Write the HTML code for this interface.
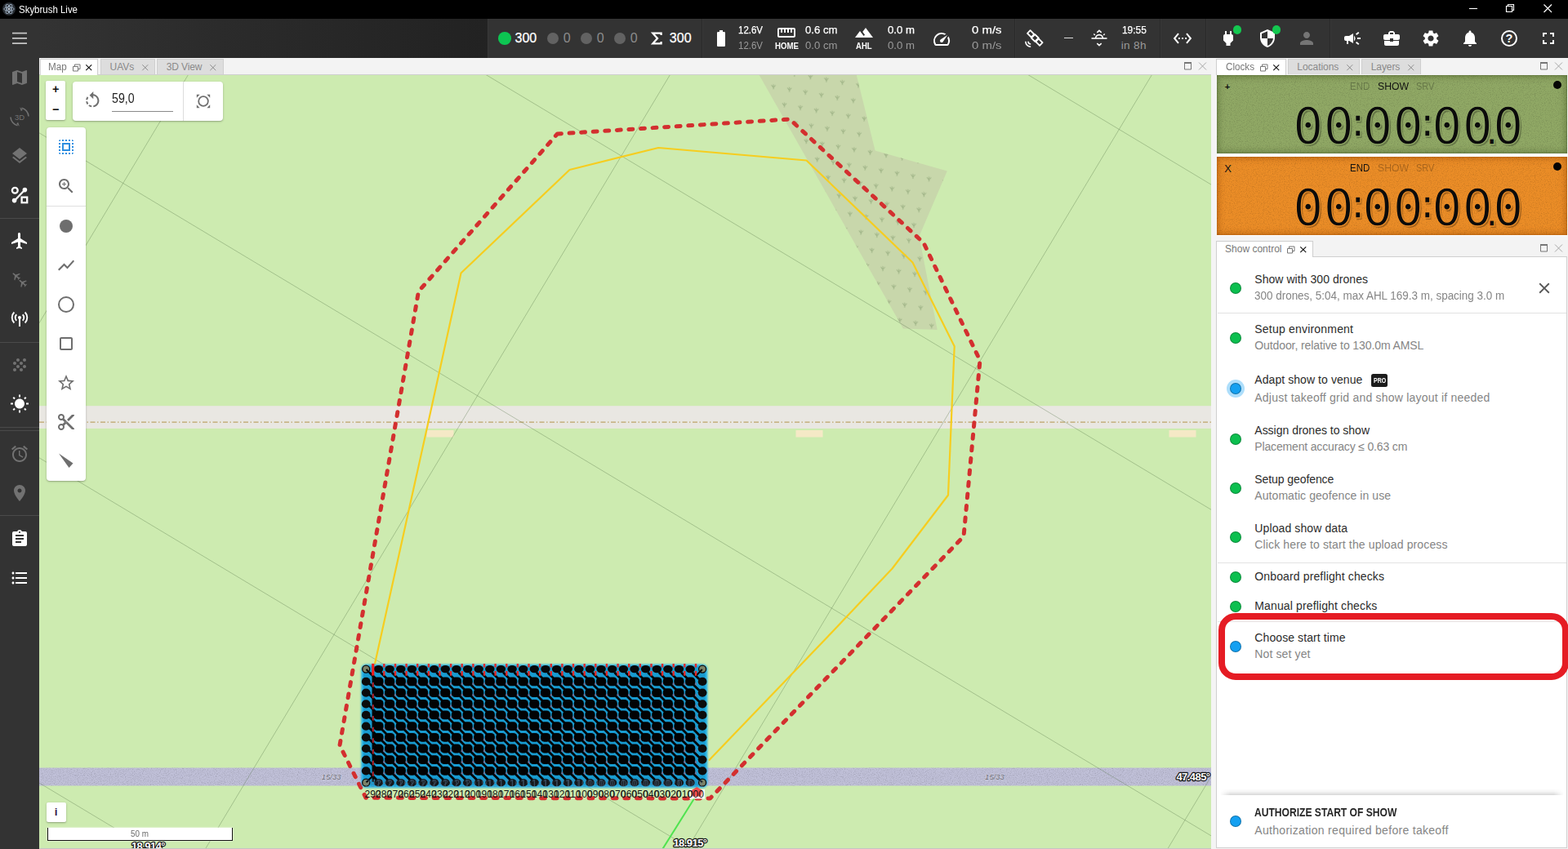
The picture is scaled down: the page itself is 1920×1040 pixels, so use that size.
<!DOCTYPE html>
<html lang="en">
<head>
<meta charset="utf-8">
<title>Skybrush Live</title>
<style>
html,body{margin:0;padding:0;background:#fff;overflow:hidden}
body{width:1920px;height:1040px;font-family:"Liberation Sans",sans-serif;-webkit-font-smoothing:antialiased}
#app{position:relative;width:1920px;height:1040px;overflow:hidden;background:#f2f2f2}
#app div,#app span,#app svg{position:absolute;box-sizing:border-box}
#app span{white-space:pre;display:block}
#app svg{display:block;overflow:visible}
.dot{border-radius:50%}
.w{-webkit-text-stroke:0.25px #fff}
#app p.digits{position:absolute;margin:0;font:400 61.5px/64px "DejaVu Sans Mono","Liberation Mono",monospace;color:#0b0b0b;white-space:pre;
 letter-spacing:0.5px;text-shadow:1.6px 1.6px 0.8px rgba(0,0,0,0.3)}
#app p.digits b{font-weight:400;font-size:50px;position:relative;top:-8.8px;margin-left:-10.7px;letter-spacing:-9.5px}
#app p.digits b.p{top:1.6px;font-size:48px;margin-left:-16px;letter-spacing:-12.9px}

</style>
</head>
<body>
<div id="app">
<div id="titlebar" style="left:0;top:0;width:1920px;height:23px;background:#000">
<svg style="left:2px;top:2px" width="18" height="18" viewBox="0 0 18 18"><circle cx="9" cy="9" r="8" fill="#2b3036"/><g fill="none" stroke="#9fb0c2" stroke-width="0.9"><ellipse cx="9" cy="9" rx="6.2" ry="2.4"/><ellipse cx="9" cy="9" rx="6.2" ry="2.4" transform="rotate(60 9 9)"/><ellipse cx="9" cy="9" rx="6.2" ry="2.4" transform="rotate(120 9 9)"/></g><circle cx="9" cy="9" r="1.2" fill="#cfd8e3"/></svg>
<span style="left:23.20px;top:5.84px;font-size:12px;line-height:12px;transform:scaleX(0.9553);transform-origin:0 0;color:#fff;">Skybrush Live</span>
<svg style="left:1790px;top:0" width="130" height="23" viewBox="0 0 130 23" fill="none" stroke="#fff" stroke-width="1.150"><path d="M9 10.5h10"/><path d="M54.5 7.5h7v7h-7z M56.5 7.5v-2h7v7h-2"/><path d="M100.5 5.5l9.5 9.5M110 5.500l-9.500 9.500"/></svg>
</div>
<div id="header" style="left:0;top:23px;width:1920px;height:48px;background:#333"></div>
<div style="left:48px;top:23px;width:549px;height:48px;background:linear-gradient(90deg,#333 0%,#2b2b2b 40%,#222 100%)"></div>
<div style="left:596.500px;top:23px;width:1px;height:48px;background:#393939"></div>
<svg style="left:15px;top:39px" width="18" height="16" viewBox="0 0 18 16" fill="#c6c6c6"><path d="M0 0.700h18v1.900H0zM0 6.950h18v1.900H0zM0 13.200h18v1.900H0z"/></svg>
<div class="dot" style="left:610.2px;top:39.2px;width:15.6px;height:15.6px;background:#0dc552"></div>
<span class="w" style="left:630.60px;top:38.86px;font-size:16px;line-height:16px;letter-spacing:-0.048px;color:#fff;">300</span>
<div class="dot" style="left:669.9px;top:40px;width:14px;height:14px;background:#626262"></div>
<span style="left:689.70px;top:38.86px;font-size:16px;line-height:16px;color:#8c8c8c;">0</span>
<div class="dot" style="left:710.8px;top:40px;width:14px;height:14px;background:#626262"></div>
<span style="left:730.70px;top:38.86px;font-size:16px;line-height:16px;color:#8c8c8c;">0</span>
<div class="dot" style="left:751.8px;top:40px;width:14px;height:14px;background:#626262"></div>
<span style="left:771.80px;top:38.86px;font-size:16px;line-height:16px;color:#8c8c8c;">0</span>
<svg style="left:796px;top:38px" width="16" height="18" viewBox="0 0 16 18" fill="none" stroke="#fff" stroke-width="2.3" stroke-linejoin="miter"><path d="M13.6 5V2.700H3.400L9 9 3.400 15.300H13.600V13"/></svg>
<span class="w" style="left:819.80px;top:38.86px;font-size:16px;line-height:16px;letter-spacing:0.052px;color:#fff;">300</span>
<div style="left:859px;top:23px;width:1px;height:48px;background:#2a2a2a"></div><div style="left:860px;top:23px;width:1px;height:48px;background:#383838"></div>
<svg style="left:871.00px;top:35.00px;" width="24" height="24" viewBox="0 0 24 24" fill="#fff"><path d="M15.67 4H14V2h-4v2H8.33C7.6 4 7 4.6 7 5.33v15.33C7 21.4 7.6 22 8.33 22h7.33c.74 0 1.34-.6 1.34-1.33V5.33C17 4.6 16.4 4 15.67 4z"/></svg>
<span class="w" style="left:903.90px;top:29.59px;font-size:13.6px;line-height:13.6px;transform:scaleX(0.8441);transform-origin:0 0;color:#fff;">12.6V</span>
<span style="left:903.90px;top:49.39px;font-size:13.6px;line-height:13.6px;transform:scaleX(0.8441);transform-origin:0 0;color:#9a9a9a;">12.6V</span>
<svg style="left:950.80px;top:28.00px;" width="24" height="24" viewBox="0 0 24 24" fill="#fff"><path d="M21 6H3c-1.1 0-2 .9-2 2v8c0 1.1.9 2 2 2h18c1.1 0 2-.9 2-2V8c0-1.1-.9-2-2-2zm0 10H3V8h2v4h2V8h2v4h2V8h2v4h2V8h2v4h2V8h2v8z"/></svg>
<span style="left:948.60px;top:50.56px;font-size:10.8px;line-height:10.8px;font-weight:700;transform:scaleX(0.8951);transform-origin:0 0;color:#fff;">HOME</span>
<span class="w" style="left:985.90px;top:29.59px;font-size:13.6px;line-height:13.6px;transform:scaleX(0.9654);transform-origin:0 0;color:#fff;">0.6 cm</span>
<span style="left:985.90px;top:49.39px;font-size:13.6px;line-height:13.6px;transform:scaleX(0.9654);transform-origin:0 0;color:#9a9a9a;">0.0 cm</span>
<svg style="left:1045.80px;top:28.00px;" width="24" height="24" viewBox="0 0 24 24" fill="#fff"><path d="M14 6l-3.75 5 2.85 3.8-1.6 1.2C9.81 13.75 7 10 7 10l-6 8h22L14 6z"/></svg>
<span style="left:1048.20px;top:50.56px;font-size:10.8px;line-height:10.8px;font-weight:700;transform:scaleX(0.8830);transform-origin:0 0;color:#fff;">AHL</span>
<span class="w" style="left:1087.20px;top:29.59px;font-size:13.6px;line-height:13.6px;transform:scaleX(0.9702);transform-origin:0 0;color:#fff;">0.0 m</span>
<span style="left:1087.20px;top:49.39px;font-size:13.6px;line-height:13.6px;transform:scaleX(0.9702);transform-origin:0 0;color:#9a9a9a;">0.0 m</span>
<svg style="left:1141.00px;top:35.50px;" width="24" height="24" viewBox="0 0 24 24" fill="#fff"><path d="M20.38 8.57l-1.23 1.85a8 8 0 0 1-.22 7.58H5.07A8 8 0 0 1 15.58 6.85l1.85-1.23A10 10 0 0 0 3.35 19a2 2 0 0 0 1.72 1h13.85a2 2 0 0 0 1.74-1 10 10 0 0 0-.27-10.44zm-9.79 6.84a2 2 0 0 0 2.83 0l5.66-8.49-8.49 5.66a2 2 0 0 0 0 2.83z"/></svg>
<span class="w" style="left:1189.60px;top:29.59px;font-size:13.6px;line-height:13.6px;transform:scaleX(1.0978);transform-origin:0 0;color:#fff;">0 m/s</span>
<span style="left:1189.60px;top:49.39px;font-size:13.6px;line-height:13.6px;transform:scaleX(1.0978);transform-origin:0 0;color:#9a9a9a;">0 m/s</span>
<div style="left:1242px;top:23px;width:1px;height:48px;background:#2a2a2a"></div><div style="left:1243px;top:23px;width:1px;height:48px;background:#383838"></div>
<svg style="left:1254px;top:35px" width="24" height="24" viewBox="0 0 24 24" fill="none" stroke="#fff" stroke-width="1.800" stroke-linejoin="round"><g transform="translate(13.300 11.500) rotate(45)"><rect x="-3.100" y="-3.100" width="6.200" height="6.200"/><rect x="-10.600" y="-2.500" width="6.700" height="5"/><rect x="3.900" y="-2.500" width="6.700" height="5"/></g><path d="M1.800 15.800a6.400 6.400 0 0 0 6.400 6.400M5 15.800a3.200 3.200 0 0 0 3.200 3.200" stroke-width="1.600"/></svg>
<div style="left:1303px;top:46px;width:11px;height:1.4px;background:#ddd"></div>
<svg style="left:1334px;top:35px" width="24" height="24" viewBox="0 0 24 24" fill="none" stroke="#fff" stroke-width="1.600"><path d="M2.500 12h19"/><path d="M7.600 12a4.400 4.400 0 0 1 8.800 0"/><path d="M9.300 4.800L12 2.400l2.700 2.400M9.300 18.200L12 20.600l2.700-2.400"/><path d="M5.300 6.600l1.500 1.500M18.700 6.600l-1.500 1.500" stroke-width="1.400"/></svg>
<span class="w" style="left:1373.90px;top:29.59px;font-size:13.6px;line-height:13.6px;transform:scaleX(0.8756);transform-origin:0 0;color:#fff;">19:55</span>
<span style="left:1372.80px;top:49.39px;font-size:13.6px;line-height:13.6px;letter-spacing:0.302px;color:#9a9a9a;">in 8h</span>
<div style="left:1420px;top:23px;width:1px;height:48px;background:#2a2a2a"></div><div style="left:1421px;top:23px;width:1px;height:48px;background:#383838"></div>
<svg style="left:1436.00px;top:34.80px;" width="24" height="24" viewBox="0 0 24 24" fill="#fff"><path d="M7.77 6.76L6.23 5.48.82 12l5.41 6.52 1.54-1.28L3.42 12l4.35-5.24zM7 13h2v-2H7v2zm10-2h-2v2h2v-2zm-6 2h2v-2h-2v2zm6.77-7.52l-1.54 1.28L20.58 12l-4.35 5.24 1.54 1.28L23.18 12l-5.41-6.52z"/></svg>
<div style="left:1476px;top:23px;width:1px;height:48px;background:#2a2a2a"></div><div style="left:1477px;top:23px;width:1px;height:48px;background:#383838"></div>
<svg style="left:1492.00px;top:35.00px;" width="24" height="24" viewBox="0 0 24 24" fill="#fff"><path d="M16.01 7L16 3h-2v4h-4V3H8v4h-.01C7 6.99 6 7.99 6 8.99v5.49L9.5 18v3h5v-3l3.5-3.51v-5.5c0-1-1-2-1.99-1.99z"/></svg>
<div class="dot" style="left:1509.7px;top:31px;width:10.6px;height:10.6px;background:#14c850"></div>
<svg style="left:1540.00px;top:35.00px;" width="24" height="24" viewBox="0 0 24 24" fill="#fff"><path d="M12 1L3 5v6c0 5.55 3.84 10.74 9 12 5.16-1.26 9-6.45 9-12V5l-9-4zm0 10.99h7c-.53 4.12-3.28 7.79-7 8.94V12H5V6.3l7-3.11v8.8z"/></svg>
<div class="dot" style="left:1557.700px;top:31px;width:10.600px;height:10.600px;background:#14c850"></div>
<svg style="left:1588.00px;top:35.00px;" width="24" height="24" viewBox="0 0 24 24" fill="#757575"><path d="M12 12c2.21 0 4-1.79 4-4s-1.79-4-4-4-4 1.79-4 4 1.79 4 4 4zm0 2c-2.67 0-8 1.34-8 4v2h16v-2c0-2.66-5.33-4-8-4z"/></svg>
<div style="left:1628px;top:23px;width:1px;height:48px;background:#2a2a2a"></div><div style="left:1629px;top:23px;width:1px;height:48px;background:#383838"></div>
<svg style="left:1644.00px;top:35.00px;" width="24" height="24" viewBox="0 0 24 24" fill="#fff"><path d="M18 11v2h4v-2h-4zm-2 6.61c.96.71 2.21 1.65 3.2 2.39.4-.53.8-1.07 1.2-1.6-.99-.74-2.24-1.68-3.2-2.4-.4.54-.8 1.08-1.2 1.61zM20.4 5.6c-.4-.53-.8-1.07-1.2-1.6-.99.74-2.24 1.68-3.2 2.4.4.53.8 1.07 1.2 1.6.96-.72 2.21-1.65 3.2-2.4zM4 9c-1.1 0-2 .9-2 2v2c0 1.1.9 2 2 2h1v4h2v-4h1l5 3V6L8 9H4zm11.5 3c0-1.33-.58-2.53-1.5-3.35v6.69c.92-.81 1.5-2.01 1.5-3.34z"/></svg>
<svg style="left:1692.00px;top:35.00px;" width="24" height="24" viewBox="0 0 24 24" fill="#fff"><path d="M10 16v-1H3.01L3 19c0 1.11.89 2 2 2h14c1.11 0 2-.89 2-2v-4h-7v1h-4zm10-9h-4.01V5l-2-2h-4l-2 2v2H4c-1.1 0-2 .9-2 2v3c0 1.11.89 2 2 2h6v-2h4v2h6c1.1 0 2-.9 2-2V9c0-1.1-.9-2-2-2zm-6 0h-4V5h4v2z"/></svg>
<svg style="left:1740.00px;top:35.00px;" width="24" height="24" viewBox="0 0 24 24" fill="#fff"><path d="M19.14 12.94c.04-.3.06-.61.06-.94 0-.32-.02-.64-.07-.94l2.03-1.58c.18-.14.23-.41.12-.61l-1.92-3.32c-.12-.22-.37-.29-.59-.22l-2.39.96c-.5-.38-1.03-.7-1.62-.94l-.36-2.54c-.04-.24-.24-.41-.48-.41h-3.84c-.24 0-.43.17-.47.41l-.36 2.54c-.59.24-1.13.57-1.62.94l-2.39-.96c-.22-.08-.47 0-.59.22L2.74 8.87c-.12.21-.08.47.12.61l2.03 1.58c-.05.3-.09.63-.09.94s.02.64.07.94l-2.03 1.58c-.18.14-.23.41-.12.61l1.92 3.32c.12.22.37.29.59.22l2.39-.96c.5.38 1.03.7 1.62.94l.36 2.54c.05.24.24.41.48.41h3.84c.24 0 .44-.17.47-.41l.36-2.54c.59-.24 1.13-.56 1.62-.94l2.39.96c.22.08.47 0 .59-.22l1.92-3.32c.12-.22.07-.47-.12-.61l-2.01-1.58zM12 15.6c-1.98 0-3.6-1.62-3.6-3.6s1.62-3.6 3.6-3.6 3.6 1.62 3.6 3.6-1.62 3.6-3.6 3.6z"/></svg>
<svg style="left:1788.00px;top:35.00px;" width="24" height="24" viewBox="0 0 24 24" fill="#fff"><path d="M12 22c1.1 0 2-.9 2-2h-4c0 1.1.89 2 2 2zm6-6v-5c0-3.07-1.64-5.64-4.5-6.32V4c0-.83-.67-1.5-1.5-1.5s-1.5.67-1.5 1.5v.68C7.63 5.36 6 7.92 6 11v5l-2 2v1h16v-1l-2-2z"/></svg>
<svg style="left:1836px;top:35px" width="24" height="24" viewBox="0 0 24 24"><circle cx="12" cy="12" r="9" fill="none" stroke="#fff" stroke-width="2"/><text x="12" y="17.200" text-anchor="middle" font-family="Liberation Sans, sans-serif" font-weight="700" font-size="14.500" fill="#fff">?</text></svg>
<svg style="left:1884.00px;top:35.00px;" width="24" height="24" viewBox="0 0 24 24" fill="#fff"><path d="M7 14H5v5h5v-2H7v-3zm-2-4h2V7h3V5H5v5zm12 7h-3v2h5v-5h-2v3zM14 5v2h3v3h2V5h-5z"/></svg>
<div id="sidebar" style="left:0;top:71px;width:48px;height:969px;background:#333"></div>
<svg style="left:12.00px;top:83.00px;" width="24" height="24" viewBox="0 0 24 24" fill="#727272"><path d="M20.5 3l-.16.03L15 5.1 9 3 3.36 4.9c-.21.07-.36.25-.36.48V20.5c0 .28.22.5.5.5l.16-.03L9 18.9l6 2.1 5.64-1.9c.21-.07.36-.25.36-.48V3.5c0-.28-.22-.5-.5-.5zM15 19l-6-2.11V5l6 2.11V19z"/></svg>
<svg style="left:12px;top:131px" width="24" height="24" viewBox="0 0 24 24" fill="none" stroke="#727272" stroke-width="1.600"><path d="M14.500 1.300A11 11 0 0 1 23 11.500"/><path d="M9.500 22.700A11 11 0 0 1 1 12.500"/><path d="M12.200 0.200l3.500 3.300-1.800 1.700z" fill="#727272" stroke="none"/><path d="M11.800 23.800l-3.500-3.300 1.800-1.700z" fill="#727272" stroke="none"/><text x="12" y="15.600" text-anchor="middle" font-family="Liberation Sans, sans-serif" font-size="9.500" fill="#727272" stroke="none">3D</text></svg>
<svg style="left:12.00px;top:179.00px;" width="24" height="24" viewBox="0 0 24 24" fill="#727272"><path d="M11.99 18.54l-7.37-5.73L3 14.07l9 7 9-7-1.63-1.27-7.38 5.74zM12 16l7.36-5.73L21 9l-9-7-9 7 1.63 1.27L12 16z"/></svg>
<svg style="left:12px;top:227px" width="24" height="24" viewBox="0 0 24 24" fill="none" stroke="#fff" stroke-width="2.300"><circle cx="6.300" cy="6.300" r="3.400"/><rect x="14.600" y="14.600" width="6.600" height="6.600"/><path d="M5.800 18.700L18.200 5.800"/><circle cx="18.400" cy="5.600" r="2.800" fill="#fff" stroke="none"/><circle cx="5.600" cy="18.600" r="2.800" fill="#fff" stroke="none"/></svg>
<div style="left:0px;top:267px;width:48px;height:1px;background:#4a4a4a"></div>
<svg style="left:12.00px;top:283.00px;" width="24" height="24" viewBox="0 0 24 24" fill="#fff"><path d="M21 16v-2l-8-5V3.5c0-.83-.67-1.5-1.5-1.5S10 2.67 10 3.5V9l-8 5v2l8-2.5V19l-2 1.5V22l3.5-1 3.5 1v-1.5L13 19v-5.5l8 2.5z"/></svg>
<svg style="left:12px;top:331px" width="24" height="24" viewBox="0 0 24 24" fill="#727272"><g transform="translate(1.500 0.500) scale(0.540) rotate(-50 12 12)"><path d="M21 16v-2l-8-5V3.5c0-.83-.67-1.5-1.5-1.5S10 2.67 10 3.5V9l-8 5v2l8-2.5V19l-2 1.5V22l3.5-1 3.5 1v-1.5L13 19v-5.5l8 2.5z"/></g><g transform="translate(9.500 9) scale(0.540) rotate(-50 12 12)"><path d="M21 16v-2l-8-5V3.5c0-.83-.67-1.5-1.5-1.5S10 2.67 10 3.5V9l-8 5v2l8-2.5V19l-2 1.5V22l3.5-1 3.5 1v-1.5L13 19v-5.5l8 2.5z"/></g></svg>
<svg style="left:12px;top:379px" width="24" height="24" viewBox="0 0 24 24" fill="none" stroke="#fff" stroke-width="1.900" stroke-linecap="butt"><circle cx="12" cy="10" r="2.100" fill="#fff" stroke="none"/><path d="M12 11v10" stroke-width="2"/><path d="M8.300 6.200a5.300 5.300 0 0 0 0 7.600M15.700 6.200a5.300 5.300 0 0 1 0 7.600M5.400 3.500a9.200 9.200 0 0 0 0 13M18.600 3.500a9.200 9.200 0 0 1 0 13"/></svg>
<div style="left:0px;top:419px;width:48px;height:1px;background:#4a4a4a"></div>
<svg style="left:12.00px;top:435.00px;" width="24" height="24" viewBox="0 0 24 24" fill="#727272"><path d="M10 12c-1.1 0-2 .9-2 2s.9 2 2 2 2-.9 2-2-.9-2-2-2zM6 8c-1.1 0-2 .9-2 2s.9 2 2 2 2-.9 2-2-.9-2-2-2zm0 8c-1.1 0-2 .9-2 2s.9 2 2 2 2-.9 2-2-.9-2-2-2zm12-8c1.1 0 2-.9 2-2s-.9-2-2-2-2 .9-2 2 .9 2 2 2zm-4 8c-1.1 0-2 .9-2 2s.9 2 2 2 2-.9 2-2-.9-2-2-2zm4-4c-1.1 0-2 .9-2 2s.9 2 2 2 2-.9 2-2-.9-2-2-2zm-4-4c-1.1 0-2 .9-2 2s.9 2 2 2 2-.9 2-2-.9-2-2-2zm-4-4c-1.1 0-2 .9-2 2s.9 2 2 2 2-.9 2-2-.9-2-2-2z"/></svg>
<svg style="left:12.00px;top:482.50px;" width="24" height="24" viewBox="0 0 24 24" fill="#fff"><path d="M6.76 4.84l-1.8-1.79-1.41 1.41 1.79 1.79 1.42-1.41zM4 10.5H1v2h3v-2zm9-9.95h-2V3.5h2V.55zm7.45 3.91l-1.41-1.41-1.79 1.79 1.41 1.41 1.79-1.79zm-3.21 13.7l1.79 1.8 1.41-1.41-1.8-1.79-1.4 1.4zM20 10.5v2h3v-2h-3zm-8-5c-3.31 0-6 2.69-6 6s2.69 6 6 6 6-2.69 6-6-2.69-6-6-6zm-1 16.95h2V19.5h-2v2.95zm-7.45-3.91l1.41 1.41 1.79-1.8-1.41-1.41-1.79 1.8z"/></svg>
<div style="left:0px;top:523px;width:48px;height:1px;background:#4a4a4a"></div>
<div style="left:0px;top:527px;width:48px;height:1px;background:#4a4a4a"></div>
<svg style="left:12.00px;top:544.00px;" width="24" height="24" viewBox="0 0 24 24" fill="#727272"><path d="M22 5.72l-4.6-3.86-1.29 1.53 4.6 3.86L22 5.72zM7.88 3.39L6.6 1.86 2 5.71l1.29 1.53 4.59-3.85zM12.5 8H11v6l4.75 2.85.75-1.23-4-2.37V8zM12 4c-4.97 0-9 4.03-9 9s4.02 9 9 9c4.97 0 9-4.03 9-9s-4.03-9-9-9zm0 16c-3.87 0-7-3.13-7-7s3.13-7 7-7 7 3.13 7 7-3.13 7-7 7z"/></svg>
<svg style="left:12.00px;top:592.00px;" width="24" height="24" viewBox="0 0 24 24" fill="#727272"><path d="M12 2C8.13 2 5 5.13 5 9c0 5.25 7 13 7 13s7-7.75 7-13c0-3.87-3.13-7-7-7zm0 9.5c-1.38 0-2.5-1.12-2.5-2.5s1.12-2.5 2.5-2.5 2.5 1.12 2.5 2.5-1.12 2.5-2.5 2.5z"/></svg>
<div style="left:0px;top:631px;width:48px;height:1px;background:#4a4a4a"></div>
<svg style="left:12.00px;top:647.50px;" width="24" height="24" viewBox="0 0 24 24" fill="#fff"><path d="M19 3h-4.18C14.4 1.84 13.3 1 12 1c-1.3 0-2.4.84-2.82 2H5c-1.1 0-2 .9-2 2v14c0 1.1.9 2 2 2h14c1.1 0 2-.9 2-2V5c0-1.1-.9-2-2-2zm-7 0c.55 0 1 .45 1 1s-.45 1-1 1-1-.45-1-1 .45-1 1-1zm2 14H7v-2h7v2zm3-4H7v-2h10v2zm0-4H7V7h10v2z"/></svg>
<svg style="left:12.00px;top:695.50px;" width="24" height="24" viewBox="0 0 24 24" fill="#fff"><path d="M4 10.5c-.83 0-1.5.67-1.5 1.5s.67 1.5 1.5 1.5 1.5-.67 1.5-1.5-.67-1.5-1.5-1.5zm0-6c-.83 0-1.5.67-1.5 1.5S3.17 7.5 4 7.5 5.5 6.83 5.5 6 4.83 4.5 4 4.5zm0 12c-.83 0-1.5.68-1.5 1.5s.68 1.5 1.5 1.5 1.5-.68 1.5-1.5-.67-1.5-1.5-1.5zM7 19h14v-2H7v2zm0-6h14v-2H7v2zm0-8v2h14V5H7z"/></svg>
<div style="left:48px;top:71px;width:1872px;height:969px;background:#f1f1f1"></div>
<div style="left:48px;top:1038.500px;width:1436px;height:1px;background:#c4c4c4"></div>
<div style="left:48px;top:71px;width:1436px;height:21px;background:#f3f3f3;border-bottom:1px solid #cfcfcf"></div>
<div style="left:48.5px;top:72px;width:71.8px;height:20px;background:#fff;border:1px solid #cfcfcf;border-bottom:0"></div>
<span style="left:59.30px;top:76.04px;font-size:12px;line-height:12px;transform:scaleX(0.9724);transform-origin:0 0;color:#777;">Map</span>
<svg style="left:89.3px;top:77.5px" width="10" height="10" viewBox="0 0 10 10" fill="none" stroke="#777" stroke-width="1"><path d="M0.5 3.5h6v5.500h-6z"/><path d="M2.500 3.500v-2.500h6.500v5.500h-2.500"/></svg>
<svg style="left:104.6px;top:78.5px" width="7.500" height="7.500" viewBox="0 0 8 8" fill="none" stroke="#111" stroke-width="1.2"><path d="M0.300 0.300l7.400 7.400M7.700 0.300l-7.400 7.400"/></svg>
<div style="left:123px;top:72px;width:67px;height:19px;background:#dddddd;border:1px solid #cfcfcf;border-bottom:0"></div>
<span style="left:134.60px;top:76.04px;font-size:12px;line-height:12px;letter-spacing:-0.061px;color:#8a8a8a;">UAVs</span>
<svg style="left:174px;top:78.5px" width="7.500" height="7.500" viewBox="0 0 8 8" fill="none" stroke="#888" stroke-width="1"><path d="M0.300 0.300l7.400 7.400M7.700 0.300l-7.400 7.400"/></svg>
<div style="left:192px;top:72px;width:81.80000000000001px;height:19px;background:#dddddd;border:1px solid #cfcfcf;border-bottom:0"></div>
<span style="left:203.80px;top:76.04px;font-size:12px;line-height:12px;letter-spacing:-0.128px;color:#8a8a8a;">3D View</span>
<svg style="left:257.4px;top:78.5px" width="7.500" height="7.500" viewBox="0 0 8 8" fill="none" stroke="#888" stroke-width="1"><path d="M0.300 0.300l7.400 7.400M7.700 0.300l-7.400 7.400"/></svg>
<svg style="left:1450px;top:76px" width="30" height="10" viewBox="0 0 30 10" fill="none"><path d="M0.500 1.500h8v7.500h-8z" stroke="#777" stroke-width="1"/><path d="M0 1h9" stroke="#777" stroke-width="2"/><path d="M18 0.500l9 9M27 0.500l-9 9" stroke="#a8a8a8" stroke-width="1"/></svg>
<svg id="map" style="left:48px;top:91.5px;overflow:hidden" width="1435" height="947.0" viewBox="48 91.5 1435 947.0">
<defs><pattern id="scrub" width="30" height="26" patternUnits="userSpaceOnUse" patternTransform="rotate(-31)"><g transform="rotate(31 7 7)"><path d="M4.500 4.200l2.500 3.300l2.500-3.300M7 9.500v-6.300" fill="none" stroke="#a3b78a" stroke-width="1.100"/></g><g transform="rotate(31 22 20)"><path d="M19.500 17.200l2.500 3.300l2.500-3.300M22 22.500v-6.300" fill="none" stroke="#a3b78a" stroke-width="1.100"/></g></pattern><filter id="noise" x="0" y="0" width="100%" height="100%"><feTurbulence type="fractalNoise" baseFrequency="0.9" numOctaves="2" seed="3" result="n"/><feColorMatrix type="matrix" values="0 0 0 0 0  0 0 0 0 0  0 0 0 0 0  0 0 0 -1.1 0.62" in="n"/><feComposite operator="in" in2="SourceGraphic"/></filter><filter id="glow" x="-5%" y="-10%" width="110%" height="120%"><feGaussianBlur stdDeviation="1.300"/></filter><filter id="halo" x="-20%" y="-20%" width="140%" height="140%"><feGaussianBlur stdDeviation="0.6"/></filter></defs>
<rect x="48" y="91.5" width="1435" height="947.0" fill="#cdebb0"/>
<polygon points="929.4,91 1048.7,91 1071.6,184 1159.8,209 1125.5,289 1147.7,403.5 1105.9,402" fill="#c8d7ab"/>
<polygon points="929.4,91 1048.7,91 1071.6,184 1159.8,209 1125.5,289 1147.7,403.5 1105.9,402" fill="url(#scrub)"/>
<rect x="48" y="496.700" width="1436" height="27.700" fill="#e9e7e2"/>
<path d="M48 516.700H1484" stroke="#bca468" stroke-width="1.200" stroke-dasharray="6 2.500 1.500 2.500" fill="none"/>
<rect x="522.5" y="526.500" width="33" height="8.500" fill="#f5e9c6"/>
<rect x="974.5" y="526.500" width="33" height="8.500" fill="#f5e9c6"/>
<rect x="1431.5" y="526.500" width="33" height="8.500" fill="#f5e9c6"/>
<rect x="48" y="940" width="1436" height="22" fill="#c0c0d8"/>
<rect x="48" y="940" width="1436" height="22" fill="#9c9cb8" filter="url(#noise)" opacity="0.3"/>
<text x="405.7" y="954.600" text-anchor="middle" font-family="Liberation Sans, sans-serif" font-style="italic" font-size="9.500" fill="#e4e4ee" stroke="#e4e4ee" stroke-width="1.200" opacity="0.45">15/33</text>
<text x="405.7" y="954.600" text-anchor="middle" font-family="Liberation Sans, sans-serif" font-style="italic" font-size="9.500" fill="#6c6c76">15/33</text>
<text x="1218" y="954.600" text-anchor="middle" font-family="Liberation Sans, sans-serif" font-style="italic" font-size="9.500" fill="#e4e4ee" stroke="#e4e4ee" stroke-width="1.200" opacity="0.45">15/33</text>
<text x="1218" y="954.600" text-anchor="middle" font-family="Liberation Sans, sans-serif" font-style="italic" font-size="9.500" fill="#6c6c76">15/33</text>
<path d="M48 162.3L1484 1023.9M595 91L1484 624.4M1258.7 91L1484 226.2M48 560.3L850 1041.5M48 958.5L190 1043.7M230.5 91L45.1 400M820.5 91L251.1 1040M1410.5 91L841.1 1040M1484 949L1429.4 1040" stroke="#567446" stroke-opacity="0.42" stroke-width="0.85" fill="none"/>
<polyline points="458.7,814.0 523.7,520.0 564.5,334.0 697.5,207.5 806.2,180.5 987.5,196.0 1117.5,321.0 1168.7,423.7 1161.0,606.0 1092.5,696.0 1013.0,780.0 868.0,931.0" fill="none" stroke="#f6cd1f" stroke-width="2.200" stroke-linejoin="round"/>
<polygon points="682.5,163.5 967.0,145.5 1131.0,297.0 1200.0,441.0 1180.0,656.5 869.5,977.5 448.0,976.8 416.0,912.5 512.5,356.5" fill="none" stroke="#d32f2f" stroke-width="5" stroke-dasharray="4.900 9.700" stroke-linecap="round" stroke-linejoin="round"/>
<path d="M850.500 977L811 1040" stroke="#4fe34f" stroke-width="2" fill="none"/>
<g id="uavs">
<rect x="442.300" y="813.200" width="424" height="151.300" rx="6" fill="#22b0e6" filter="url(#glow)"/>
<rect x="445" y="816" width="418.500" height="145.500" rx="4" fill="#189bd0"/>
<defs><rect id="bl" x="-6.100" y="-5.400" width="12.200" height="10.800" rx="4.600" fill="#020304"/><ellipse id="bt" rx="5.700" ry="4.700" fill="#06080a"/><circle id="bc" r="4.500" fill="#7b8266" stroke="#0a0a0a" stroke-width="1.300"/><ellipse id="be" rx="5.400" ry="5.100" fill="#0b0c0c"/><ellipse id="bb" rx="5.700" ry="4.600" fill="#15181c"/><path id="arm" d="M-4.200 -4.400L4.200 4" stroke="#020304" stroke-width="2.800" fill="none"/><path id="tk" d="M0 -15.200V-10.500M0 -6V-0.400" stroke="#e02a2a" stroke-width="2.400" fill="none"/><path id="td" d="M0 -5.500V-2.500" stroke="#d8405a" stroke-width="1.500" fill="none" opacity="0.55"/></defs>
<use href="#bc" x="448.2" y="819.1"/><use href="#bt" x="463.5" y="819.1"/><use href="#bt" x="477.1" y="819.1"/><use href="#bt" x="490.8" y="819.1"/><use href="#bt" x="504.4" y="819.1"/><use href="#bt" x="518.0" y="819.1"/><use href="#bt" x="531.7" y="819.1"/><use href="#bt" x="545.3" y="819.1"/><use href="#bt" x="558.9" y="819.1"/><use href="#bt" x="572.6" y="819.1"/><use href="#bt" x="586.2" y="819.1"/><use href="#bt" x="599.8" y="819.1"/><use href="#bt" x="613.4" y="819.1"/><use href="#bt" x="627.1" y="819.1"/><use href="#bt" x="640.7" y="819.1"/><use href="#bt" x="654.3" y="819.1"/><use href="#bt" x="668.0" y="819.1"/><use href="#bt" x="681.6" y="819.1"/><use href="#bt" x="695.2" y="819.1"/><use href="#bt" x="708.9" y="819.1"/><use href="#bt" x="722.5" y="819.1"/><use href="#bt" x="736.1" y="819.1"/><use href="#bt" x="749.7" y="819.1"/><use href="#bt" x="763.4" y="819.1"/><use href="#bt" x="777.0" y="819.1"/><use href="#bt" x="790.6" y="819.1"/><use href="#bt" x="804.3" y="819.1"/><use href="#bt" x="817.9" y="819.1"/><use href="#bt" x="831.5" y="819.1"/><use href="#bt" x="845.2" y="819.1"/><use href="#bc" x="860.1" y="819.1"/><use href="#be" x="448.2" y="834.4"/><use href="#bl" x="463.5" y="834.4"/><use href="#bl" x="477.1" y="834.4"/><use href="#bl" x="490.8" y="834.4"/><use href="#bl" x="504.4" y="834.4"/><use href="#bl" x="518.0" y="834.4"/><use href="#bl" x="531.7" y="834.4"/><use href="#bl" x="545.3" y="834.4"/><use href="#bl" x="558.9" y="834.4"/><use href="#bl" x="572.6" y="834.4"/><use href="#bl" x="586.2" y="834.4"/><use href="#bl" x="599.8" y="834.4"/><use href="#bl" x="613.4" y="834.4"/><use href="#bl" x="627.1" y="834.4"/><use href="#bl" x="640.7" y="834.4"/><use href="#bl" x="654.3" y="834.4"/><use href="#bl" x="668.0" y="834.4"/><use href="#bl" x="681.6" y="834.4"/><use href="#bl" x="695.2" y="834.4"/><use href="#bl" x="708.9" y="834.4"/><use href="#bl" x="722.5" y="834.4"/><use href="#bl" x="736.1" y="834.4"/><use href="#bl" x="749.7" y="834.4"/><use href="#bl" x="763.4" y="834.4"/><use href="#bl" x="777.0" y="834.4"/><use href="#bl" x="790.6" y="834.4"/><use href="#bl" x="804.3" y="834.4"/><use href="#bl" x="817.9" y="834.4"/><use href="#bl" x="831.5" y="834.4"/><use href="#bl" x="845.2" y="834.4"/><use href="#be" x="860.1" y="834.4"/><use href="#be" x="448.2" y="848.1"/><use href="#bl" x="463.5" y="848.1"/><use href="#bl" x="477.1" y="848.1"/><use href="#bl" x="490.8" y="848.1"/><use href="#bl" x="504.4" y="848.1"/><use href="#bl" x="518.0" y="848.1"/><use href="#bl" x="531.7" y="848.1"/><use href="#bl" x="545.3" y="848.1"/><use href="#bl" x="558.9" y="848.1"/><use href="#bl" x="572.6" y="848.1"/><use href="#bl" x="586.2" y="848.1"/><use href="#bl" x="599.8" y="848.1"/><use href="#bl" x="613.4" y="848.1"/><use href="#bl" x="627.1" y="848.1"/><use href="#bl" x="640.7" y="848.1"/><use href="#bl" x="654.3" y="848.1"/><use href="#bl" x="668.0" y="848.1"/><use href="#bl" x="681.6" y="848.1"/><use href="#bl" x="695.2" y="848.1"/><use href="#bl" x="708.9" y="848.1"/><use href="#bl" x="722.5" y="848.1"/><use href="#bl" x="736.1" y="848.1"/><use href="#bl" x="749.7" y="848.1"/><use href="#bl" x="763.4" y="848.1"/><use href="#bl" x="777.0" y="848.1"/><use href="#bl" x="790.6" y="848.1"/><use href="#bl" x="804.3" y="848.1"/><use href="#bl" x="817.9" y="848.1"/><use href="#bl" x="831.5" y="848.1"/><use href="#bl" x="845.2" y="848.1"/><use href="#be" x="860.1" y="848.1"/><use href="#be" x="448.2" y="861.8"/><use href="#bl" x="463.5" y="861.8"/><use href="#bl" x="477.1" y="861.8"/><use href="#bl" x="490.8" y="861.8"/><use href="#bl" x="504.4" y="861.8"/><use href="#bl" x="518.0" y="861.8"/><use href="#bl" x="531.7" y="861.8"/><use href="#bl" x="545.3" y="861.8"/><use href="#bl" x="558.9" y="861.8"/><use href="#bl" x="572.6" y="861.8"/><use href="#bl" x="586.2" y="861.8"/><use href="#bl" x="599.8" y="861.8"/><use href="#bl" x="613.4" y="861.8"/><use href="#bl" x="627.1" y="861.8"/><use href="#bl" x="640.7" y="861.8"/><use href="#bl" x="654.3" y="861.8"/><use href="#bl" x="668.0" y="861.8"/><use href="#bl" x="681.6" y="861.8"/><use href="#bl" x="695.2" y="861.8"/><use href="#bl" x="708.9" y="861.8"/><use href="#bl" x="722.5" y="861.8"/><use href="#bl" x="736.1" y="861.8"/><use href="#bl" x="749.7" y="861.8"/><use href="#bl" x="763.4" y="861.8"/><use href="#bl" x="777.0" y="861.8"/><use href="#bl" x="790.6" y="861.8"/><use href="#bl" x="804.3" y="861.8"/><use href="#bl" x="817.9" y="861.8"/><use href="#bl" x="831.5" y="861.8"/><use href="#bl" x="845.2" y="861.8"/><use href="#be" x="860.1" y="861.8"/><use href="#be" x="448.2" y="875.4"/><use href="#bl" x="463.5" y="875.4"/><use href="#bl" x="477.1" y="875.4"/><use href="#bl" x="490.8" y="875.4"/><use href="#bl" x="504.4" y="875.4"/><use href="#bl" x="518.0" y="875.4"/><use href="#bl" x="531.7" y="875.4"/><use href="#bl" x="545.3" y="875.4"/><use href="#bl" x="558.9" y="875.4"/><use href="#bl" x="572.6" y="875.4"/><use href="#bl" x="586.2" y="875.4"/><use href="#bl" x="599.8" y="875.4"/><use href="#bl" x="613.4" y="875.4"/><use href="#bl" x="627.1" y="875.4"/><use href="#bl" x="640.7" y="875.4"/><use href="#bl" x="654.3" y="875.4"/><use href="#bl" x="668.0" y="875.4"/><use href="#bl" x="681.6" y="875.4"/><use href="#bl" x="695.2" y="875.4"/><use href="#bl" x="708.9" y="875.4"/><use href="#bl" x="722.5" y="875.4"/><use href="#bl" x="736.1" y="875.4"/><use href="#bl" x="749.7" y="875.4"/><use href="#bl" x="763.4" y="875.4"/><use href="#bl" x="777.0" y="875.4"/><use href="#bl" x="790.6" y="875.4"/><use href="#bl" x="804.3" y="875.4"/><use href="#bl" x="817.9" y="875.4"/><use href="#bl" x="831.5" y="875.4"/><use href="#bl" x="845.2" y="875.4"/><use href="#be" x="860.1" y="875.4"/><use href="#be" x="448.2" y="889.1"/><use href="#bl" x="463.5" y="889.1"/><use href="#bl" x="477.1" y="889.1"/><use href="#bl" x="490.8" y="889.1"/><use href="#bl" x="504.4" y="889.1"/><use href="#bl" x="518.0" y="889.1"/><use href="#bl" x="531.7" y="889.1"/><use href="#bl" x="545.3" y="889.1"/><use href="#bl" x="558.9" y="889.1"/><use href="#bl" x="572.6" y="889.1"/><use href="#bl" x="586.2" y="889.1"/><use href="#bl" x="599.8" y="889.1"/><use href="#bl" x="613.4" y="889.1"/><use href="#bl" x="627.1" y="889.1"/><use href="#bl" x="640.7" y="889.1"/><use href="#bl" x="654.3" y="889.1"/><use href="#bl" x="668.0" y="889.1"/><use href="#bl" x="681.6" y="889.1"/><use href="#bl" x="695.2" y="889.1"/><use href="#bl" x="708.9" y="889.1"/><use href="#bl" x="722.5" y="889.1"/><use href="#bl" x="736.1" y="889.1"/><use href="#bl" x="749.7" y="889.1"/><use href="#bl" x="763.4" y="889.1"/><use href="#bl" x="777.0" y="889.1"/><use href="#bl" x="790.6" y="889.1"/><use href="#bl" x="804.3" y="889.1"/><use href="#bl" x="817.9" y="889.1"/><use href="#bl" x="831.5" y="889.1"/><use href="#bl" x="845.2" y="889.1"/><use href="#be" x="860.1" y="889.1"/><use href="#be" x="448.2" y="902.8"/><use href="#bl" x="463.5" y="902.8"/><use href="#bl" x="477.1" y="902.8"/><use href="#bl" x="490.8" y="902.8"/><use href="#bl" x="504.4" y="902.8"/><use href="#bl" x="518.0" y="902.8"/><use href="#bl" x="531.7" y="902.8"/><use href="#bl" x="545.3" y="902.8"/><use href="#bl" x="558.9" y="902.8"/><use href="#bl" x="572.6" y="902.8"/><use href="#bl" x="586.2" y="902.8"/><use href="#bl" x="599.8" y="902.8"/><use href="#bl" x="613.4" y="902.8"/><use href="#bl" x="627.1" y="902.8"/><use href="#bl" x="640.7" y="902.8"/><use href="#bl" x="654.3" y="902.8"/><use href="#bl" x="668.0" y="902.8"/><use href="#bl" x="681.6" y="902.8"/><use href="#bl" x="695.2" y="902.8"/><use href="#bl" x="708.9" y="902.8"/><use href="#bl" x="722.5" y="902.8"/><use href="#bl" x="736.1" y="902.8"/><use href="#bl" x="749.7" y="902.8"/><use href="#bl" x="763.4" y="902.8"/><use href="#bl" x="777.0" y="902.8"/><use href="#bl" x="790.6" y="902.8"/><use href="#bl" x="804.3" y="902.8"/><use href="#bl" x="817.9" y="902.8"/><use href="#bl" x="831.5" y="902.8"/><use href="#bl" x="845.2" y="902.8"/><use href="#be" x="860.1" y="902.8"/><use href="#be" x="448.2" y="916.5"/><use href="#bl" x="463.5" y="916.5"/><use href="#bl" x="477.1" y="916.5"/><use href="#bl" x="490.8" y="916.5"/><use href="#bl" x="504.4" y="916.5"/><use href="#bl" x="518.0" y="916.5"/><use href="#bl" x="531.7" y="916.5"/><use href="#bl" x="545.3" y="916.5"/><use href="#bl" x="558.9" y="916.5"/><use href="#bl" x="572.6" y="916.5"/><use href="#bl" x="586.2" y="916.5"/><use href="#bl" x="599.8" y="916.5"/><use href="#bl" x="613.4" y="916.5"/><use href="#bl" x="627.1" y="916.5"/><use href="#bl" x="640.7" y="916.5"/><use href="#bl" x="654.3" y="916.5"/><use href="#bl" x="668.0" y="916.5"/><use href="#bl" x="681.6" y="916.5"/><use href="#bl" x="695.2" y="916.5"/><use href="#bl" x="708.9" y="916.5"/><use href="#bl" x="722.5" y="916.5"/><use href="#bl" x="736.1" y="916.5"/><use href="#bl" x="749.7" y="916.5"/><use href="#bl" x="763.4" y="916.5"/><use href="#bl" x="777.0" y="916.5"/><use href="#bl" x="790.6" y="916.5"/><use href="#bl" x="804.3" y="916.5"/><use href="#bl" x="817.9" y="916.5"/><use href="#bl" x="831.5" y="916.5"/><use href="#bl" x="845.2" y="916.5"/><use href="#be" x="860.1" y="916.5"/><use href="#be" x="448.2" y="930.1"/><use href="#bl" x="463.5" y="930.1"/><use href="#bl" x="477.1" y="930.1"/><use href="#bl" x="490.8" y="930.1"/><use href="#bl" x="504.4" y="930.1"/><use href="#bl" x="518.0" y="930.1"/><use href="#bl" x="531.7" y="930.1"/><use href="#bl" x="545.3" y="930.1"/><use href="#bl" x="558.9" y="930.1"/><use href="#bl" x="572.6" y="930.1"/><use href="#bl" x="586.2" y="930.1"/><use href="#bl" x="599.8" y="930.1"/><use href="#bl" x="613.4" y="930.1"/><use href="#bl" x="627.1" y="930.1"/><use href="#bl" x="640.7" y="930.1"/><use href="#bl" x="654.3" y="930.1"/><use href="#bl" x="668.0" y="930.1"/><use href="#bl" x="681.6" y="930.1"/><use href="#bl" x="695.2" y="930.1"/><use href="#bl" x="708.9" y="930.1"/><use href="#bl" x="722.5" y="930.1"/><use href="#bl" x="736.1" y="930.1"/><use href="#bl" x="749.7" y="930.1"/><use href="#bl" x="763.4" y="930.1"/><use href="#bl" x="777.0" y="930.1"/><use href="#bl" x="790.6" y="930.1"/><use href="#bl" x="804.3" y="930.1"/><use href="#bl" x="817.9" y="930.1"/><use href="#bl" x="831.5" y="930.1"/><use href="#bl" x="845.2" y="930.1"/><use href="#be" x="860.1" y="930.1"/><use href="#be" x="448.2" y="943.8"/><use href="#bl" x="463.5" y="943.8"/><use href="#bl" x="477.1" y="943.8"/><use href="#bl" x="490.8" y="943.8"/><use href="#bl" x="504.4" y="943.8"/><use href="#bl" x="518.0" y="943.8"/><use href="#bl" x="531.7" y="943.8"/><use href="#bl" x="545.3" y="943.8"/><use href="#bl" x="558.9" y="943.8"/><use href="#bl" x="572.6" y="943.8"/><use href="#bl" x="586.2" y="943.8"/><use href="#bl" x="599.8" y="943.8"/><use href="#bl" x="613.4" y="943.8"/><use href="#bl" x="627.1" y="943.8"/><use href="#bl" x="640.7" y="943.8"/><use href="#bl" x="654.3" y="943.8"/><use href="#bl" x="668.0" y="943.8"/><use href="#bl" x="681.6" y="943.8"/><use href="#bl" x="695.2" y="943.8"/><use href="#bl" x="708.9" y="943.8"/><use href="#bl" x="722.5" y="943.8"/><use href="#bl" x="736.1" y="943.8"/><use href="#bl" x="749.7" y="943.8"/><use href="#bl" x="763.4" y="943.8"/><use href="#bl" x="777.0" y="943.8"/><use href="#bl" x="790.6" y="943.8"/><use href="#bl" x="804.3" y="943.8"/><use href="#bl" x="817.9" y="943.8"/><use href="#bl" x="831.5" y="943.8"/><use href="#bl" x="845.2" y="943.8"/><use href="#be" x="860.1" y="943.8"/><use href="#bc" x="448.2" y="958.2"/><use href="#bb" x="463.5" y="958.2"/><use href="#bb" x="477.1" y="958.2"/><use href="#bb" x="490.8" y="958.2"/><use href="#bb" x="504.4" y="958.2"/><use href="#bb" x="518.0" y="958.2"/><use href="#bb" x="531.7" y="958.2"/><use href="#bb" x="545.3" y="958.2"/><use href="#bb" x="558.9" y="958.2"/><use href="#bb" x="572.6" y="958.2"/><use href="#bb" x="586.2" y="958.2"/><use href="#bb" x="599.8" y="958.2"/><use href="#bb" x="613.4" y="958.2"/><use href="#bb" x="627.1" y="958.2"/><use href="#bb" x="640.7" y="958.2"/><use href="#bb" x="654.3" y="958.2"/><use href="#bb" x="668.0" y="958.2"/><use href="#bb" x="681.6" y="958.2"/><use href="#bb" x="695.2" y="958.2"/><use href="#bb" x="708.9" y="958.2"/><use href="#bb" x="722.5" y="958.2"/><use href="#bb" x="736.1" y="958.2"/><use href="#bb" x="749.7" y="958.2"/><use href="#bb" x="763.4" y="958.2"/><use href="#bb" x="777.0" y="958.2"/><use href="#bb" x="790.6" y="958.2"/><use href="#bb" x="804.3" y="958.2"/><use href="#bb" x="817.9" y="958.2"/><use href="#bb" x="831.5" y="958.2"/><use href="#bb" x="845.2" y="958.2"/><use href="#bc" x="860.1" y="958.2"/>
<use href="#arm" x="456.7" y="827.6"/><use href="#arm" x="470.3" y="827.6"/><use href="#arm" x="484.0" y="827.6"/><use href="#arm" x="497.6" y="827.6"/><use href="#arm" x="511.2" y="827.6"/><use href="#arm" x="524.9" y="827.6"/><use href="#arm" x="538.5" y="827.6"/><use href="#arm" x="552.1" y="827.6"/><use href="#arm" x="565.7" y="827.6"/><use href="#arm" x="579.4" y="827.6"/><use href="#arm" x="593.0" y="827.6"/><use href="#arm" x="606.6" y="827.6"/><use href="#arm" x="620.3" y="827.6"/><use href="#arm" x="633.9" y="827.6"/><use href="#arm" x="647.5" y="827.6"/><use href="#arm" x="661.1" y="827.6"/><use href="#arm" x="674.8" y="827.6"/><use href="#arm" x="688.4" y="827.6"/><use href="#arm" x="702.0" y="827.6"/><use href="#arm" x="715.7" y="827.6"/><use href="#arm" x="729.3" y="827.6"/><use href="#arm" x="742.9" y="827.6"/><use href="#arm" x="756.6" y="827.6"/><use href="#arm" x="770.2" y="827.6"/><use href="#arm" x="783.8" y="827.6"/><use href="#arm" x="797.5" y="827.6"/><use href="#arm" x="811.1" y="827.6"/><use href="#arm" x="824.7" y="827.6"/><use href="#arm" x="838.3" y="827.6"/><use href="#arm" x="852.0" y="827.6"/><use href="#arm" x="456.7" y="841.3"/><use href="#arm" x="470.3" y="841.3"/><use href="#arm" x="484.0" y="841.3"/><use href="#arm" x="497.6" y="841.3"/><use href="#arm" x="511.2" y="841.3"/><use href="#arm" x="524.9" y="841.3"/><use href="#arm" x="538.5" y="841.3"/><use href="#arm" x="552.1" y="841.3"/><use href="#arm" x="565.7" y="841.3"/><use href="#arm" x="579.4" y="841.3"/><use href="#arm" x="593.0" y="841.3"/><use href="#arm" x="606.6" y="841.3"/><use href="#arm" x="620.3" y="841.3"/><use href="#arm" x="633.9" y="841.3"/><use href="#arm" x="647.5" y="841.3"/><use href="#arm" x="661.1" y="841.3"/><use href="#arm" x="674.8" y="841.3"/><use href="#arm" x="688.4" y="841.3"/><use href="#arm" x="702.0" y="841.3"/><use href="#arm" x="715.7" y="841.3"/><use href="#arm" x="729.3" y="841.3"/><use href="#arm" x="742.9" y="841.3"/><use href="#arm" x="756.6" y="841.3"/><use href="#arm" x="770.2" y="841.3"/><use href="#arm" x="783.8" y="841.3"/><use href="#arm" x="797.5" y="841.3"/><use href="#arm" x="811.1" y="841.3"/><use href="#arm" x="824.7" y="841.3"/><use href="#arm" x="838.3" y="841.3"/><use href="#arm" x="852.0" y="841.3"/><use href="#arm" x="456.7" y="854.9"/><use href="#arm" x="470.3" y="854.9"/><use href="#arm" x="484.0" y="854.9"/><use href="#arm" x="497.6" y="854.9"/><use href="#arm" x="511.2" y="854.9"/><use href="#arm" x="524.9" y="854.9"/><use href="#arm" x="538.5" y="854.9"/><use href="#arm" x="552.1" y="854.9"/><use href="#arm" x="565.7" y="854.9"/><use href="#arm" x="579.4" y="854.9"/><use href="#arm" x="593.0" y="854.9"/><use href="#arm" x="606.6" y="854.9"/><use href="#arm" x="620.3" y="854.9"/><use href="#arm" x="633.9" y="854.9"/><use href="#arm" x="647.5" y="854.9"/><use href="#arm" x="661.1" y="854.9"/><use href="#arm" x="674.8" y="854.9"/><use href="#arm" x="688.4" y="854.9"/><use href="#arm" x="702.0" y="854.9"/><use href="#arm" x="715.7" y="854.9"/><use href="#arm" x="729.3" y="854.9"/><use href="#arm" x="742.9" y="854.9"/><use href="#arm" x="756.6" y="854.9"/><use href="#arm" x="770.2" y="854.9"/><use href="#arm" x="783.8" y="854.9"/><use href="#arm" x="797.5" y="854.9"/><use href="#arm" x="811.1" y="854.9"/><use href="#arm" x="824.7" y="854.9"/><use href="#arm" x="838.3" y="854.9"/><use href="#arm" x="852.0" y="854.9"/><use href="#arm" x="456.7" y="868.6"/><use href="#arm" x="470.3" y="868.6"/><use href="#arm" x="484.0" y="868.6"/><use href="#arm" x="497.6" y="868.6"/><use href="#arm" x="511.2" y="868.6"/><use href="#arm" x="524.9" y="868.6"/><use href="#arm" x="538.5" y="868.6"/><use href="#arm" x="552.1" y="868.6"/><use href="#arm" x="565.7" y="868.6"/><use href="#arm" x="579.4" y="868.6"/><use href="#arm" x="593.0" y="868.6"/><use href="#arm" x="606.6" y="868.6"/><use href="#arm" x="620.3" y="868.6"/><use href="#arm" x="633.9" y="868.6"/><use href="#arm" x="647.5" y="868.6"/><use href="#arm" x="661.1" y="868.6"/><use href="#arm" x="674.8" y="868.6"/><use href="#arm" x="688.4" y="868.6"/><use href="#arm" x="702.0" y="868.6"/><use href="#arm" x="715.7" y="868.6"/><use href="#arm" x="729.3" y="868.6"/><use href="#arm" x="742.9" y="868.6"/><use href="#arm" x="756.6" y="868.6"/><use href="#arm" x="770.2" y="868.6"/><use href="#arm" x="783.8" y="868.6"/><use href="#arm" x="797.5" y="868.6"/><use href="#arm" x="811.1" y="868.6"/><use href="#arm" x="824.7" y="868.6"/><use href="#arm" x="838.3" y="868.6"/><use href="#arm" x="852.0" y="868.6"/><use href="#arm" x="456.7" y="882.3"/><use href="#arm" x="470.3" y="882.3"/><use href="#arm" x="484.0" y="882.3"/><use href="#arm" x="497.6" y="882.3"/><use href="#arm" x="511.2" y="882.3"/><use href="#arm" x="524.9" y="882.3"/><use href="#arm" x="538.5" y="882.3"/><use href="#arm" x="552.1" y="882.3"/><use href="#arm" x="565.7" y="882.3"/><use href="#arm" x="579.4" y="882.3"/><use href="#arm" x="593.0" y="882.3"/><use href="#arm" x="606.6" y="882.3"/><use href="#arm" x="620.3" y="882.3"/><use href="#arm" x="633.9" y="882.3"/><use href="#arm" x="647.5" y="882.3"/><use href="#arm" x="661.1" y="882.3"/><use href="#arm" x="674.8" y="882.3"/><use href="#arm" x="688.4" y="882.3"/><use href="#arm" x="702.0" y="882.3"/><use href="#arm" x="715.7" y="882.3"/><use href="#arm" x="729.3" y="882.3"/><use href="#arm" x="742.9" y="882.3"/><use href="#arm" x="756.6" y="882.3"/><use href="#arm" x="770.2" y="882.3"/><use href="#arm" x="783.8" y="882.3"/><use href="#arm" x="797.5" y="882.3"/><use href="#arm" x="811.1" y="882.3"/><use href="#arm" x="824.7" y="882.3"/><use href="#arm" x="838.3" y="882.3"/><use href="#arm" x="852.0" y="882.3"/><use href="#arm" x="456.7" y="896.0"/><use href="#arm" x="470.3" y="896.0"/><use href="#arm" x="484.0" y="896.0"/><use href="#arm" x="497.6" y="896.0"/><use href="#arm" x="511.2" y="896.0"/><use href="#arm" x="524.9" y="896.0"/><use href="#arm" x="538.5" y="896.0"/><use href="#arm" x="552.1" y="896.0"/><use href="#arm" x="565.7" y="896.0"/><use href="#arm" x="579.4" y="896.0"/><use href="#arm" x="593.0" y="896.0"/><use href="#arm" x="606.6" y="896.0"/><use href="#arm" x="620.3" y="896.0"/><use href="#arm" x="633.9" y="896.0"/><use href="#arm" x="647.5" y="896.0"/><use href="#arm" x="661.1" y="896.0"/><use href="#arm" x="674.8" y="896.0"/><use href="#arm" x="688.4" y="896.0"/><use href="#arm" x="702.0" y="896.0"/><use href="#arm" x="715.7" y="896.0"/><use href="#arm" x="729.3" y="896.0"/><use href="#arm" x="742.9" y="896.0"/><use href="#arm" x="756.6" y="896.0"/><use href="#arm" x="770.2" y="896.0"/><use href="#arm" x="783.8" y="896.0"/><use href="#arm" x="797.5" y="896.0"/><use href="#arm" x="811.1" y="896.0"/><use href="#arm" x="824.7" y="896.0"/><use href="#arm" x="838.3" y="896.0"/><use href="#arm" x="852.0" y="896.0"/><use href="#arm" x="456.7" y="909.6"/><use href="#arm" x="470.3" y="909.6"/><use href="#arm" x="484.0" y="909.6"/><use href="#arm" x="497.6" y="909.6"/><use href="#arm" x="511.2" y="909.6"/><use href="#arm" x="524.9" y="909.6"/><use href="#arm" x="538.5" y="909.6"/><use href="#arm" x="552.1" y="909.6"/><use href="#arm" x="565.7" y="909.6"/><use href="#arm" x="579.4" y="909.6"/><use href="#arm" x="593.0" y="909.6"/><use href="#arm" x="606.6" y="909.6"/><use href="#arm" x="620.3" y="909.6"/><use href="#arm" x="633.9" y="909.6"/><use href="#arm" x="647.5" y="909.6"/><use href="#arm" x="661.1" y="909.6"/><use href="#arm" x="674.8" y="909.6"/><use href="#arm" x="688.4" y="909.6"/><use href="#arm" x="702.0" y="909.6"/><use href="#arm" x="715.7" y="909.6"/><use href="#arm" x="729.3" y="909.6"/><use href="#arm" x="742.9" y="909.6"/><use href="#arm" x="756.6" y="909.6"/><use href="#arm" x="770.2" y="909.6"/><use href="#arm" x="783.8" y="909.6"/><use href="#arm" x="797.5" y="909.6"/><use href="#arm" x="811.1" y="909.6"/><use href="#arm" x="824.7" y="909.6"/><use href="#arm" x="838.3" y="909.6"/><use href="#arm" x="852.0" y="909.6"/><use href="#arm" x="456.7" y="923.3"/><use href="#arm" x="470.3" y="923.3"/><use href="#arm" x="484.0" y="923.3"/><use href="#arm" x="497.6" y="923.3"/><use href="#arm" x="511.2" y="923.3"/><use href="#arm" x="524.9" y="923.3"/><use href="#arm" x="538.5" y="923.3"/><use href="#arm" x="552.1" y="923.3"/><use href="#arm" x="565.7" y="923.3"/><use href="#arm" x="579.4" y="923.3"/><use href="#arm" x="593.0" y="923.3"/><use href="#arm" x="606.6" y="923.3"/><use href="#arm" x="620.3" y="923.3"/><use href="#arm" x="633.9" y="923.3"/><use href="#arm" x="647.5" y="923.3"/><use href="#arm" x="661.1" y="923.3"/><use href="#arm" x="674.8" y="923.3"/><use href="#arm" x="688.4" y="923.3"/><use href="#arm" x="702.0" y="923.3"/><use href="#arm" x="715.7" y="923.3"/><use href="#arm" x="729.3" y="923.3"/><use href="#arm" x="742.9" y="923.3"/><use href="#arm" x="756.6" y="923.3"/><use href="#arm" x="770.2" y="923.3"/><use href="#arm" x="783.8" y="923.3"/><use href="#arm" x="797.5" y="923.3"/><use href="#arm" x="811.1" y="923.3"/><use href="#arm" x="824.7" y="923.3"/><use href="#arm" x="838.3" y="923.3"/><use href="#arm" x="852.0" y="923.3"/><use href="#arm" x="456.7" y="937.0"/><use href="#arm" x="470.3" y="937.0"/><use href="#arm" x="484.0" y="937.0"/><use href="#arm" x="497.6" y="937.0"/><use href="#arm" x="511.2" y="937.0"/><use href="#arm" x="524.9" y="937.0"/><use href="#arm" x="538.5" y="937.0"/><use href="#arm" x="552.1" y="937.0"/><use href="#arm" x="565.7" y="937.0"/><use href="#arm" x="579.4" y="937.0"/><use href="#arm" x="593.0" y="937.0"/><use href="#arm" x="606.6" y="937.0"/><use href="#arm" x="620.3" y="937.0"/><use href="#arm" x="633.9" y="937.0"/><use href="#arm" x="647.5" y="937.0"/><use href="#arm" x="661.1" y="937.0"/><use href="#arm" x="674.8" y="937.0"/><use href="#arm" x="688.4" y="937.0"/><use href="#arm" x="702.0" y="937.0"/><use href="#arm" x="715.7" y="937.0"/><use href="#arm" x="729.3" y="937.0"/><use href="#arm" x="742.9" y="937.0"/><use href="#arm" x="756.6" y="937.0"/><use href="#arm" x="770.2" y="937.0"/><use href="#arm" x="783.8" y="937.0"/><use href="#arm" x="797.5" y="937.0"/><use href="#arm" x="811.1" y="937.0"/><use href="#arm" x="824.7" y="937.0"/><use href="#arm" x="838.3" y="937.0"/><use href="#arm" x="852.0" y="937.0"/><use href="#arm" x="456.7" y="950.6"/><use href="#arm" x="470.3" y="950.6"/><use href="#arm" x="484.0" y="950.6"/><use href="#arm" x="497.6" y="950.6"/><use href="#arm" x="511.2" y="950.6"/><use href="#arm" x="524.9" y="950.6"/><use href="#arm" x="538.5" y="950.6"/><use href="#arm" x="552.1" y="950.6"/><use href="#arm" x="565.7" y="950.6"/><use href="#arm" x="579.4" y="950.6"/><use href="#arm" x="593.0" y="950.6"/><use href="#arm" x="606.6" y="950.6"/><use href="#arm" x="620.3" y="950.6"/><use href="#arm" x="633.9" y="950.6"/><use href="#arm" x="647.5" y="950.6"/><use href="#arm" x="661.1" y="950.6"/><use href="#arm" x="674.8" y="950.6"/><use href="#arm" x="688.4" y="950.6"/><use href="#arm" x="702.0" y="950.6"/><use href="#arm" x="715.7" y="950.6"/><use href="#arm" x="729.3" y="950.6"/><use href="#arm" x="742.9" y="950.6"/><use href="#arm" x="756.6" y="950.6"/><use href="#arm" x="770.2" y="950.6"/><use href="#arm" x="783.8" y="950.6"/><use href="#arm" x="797.5" y="950.6"/><use href="#arm" x="811.1" y="950.6"/><use href="#arm" x="824.7" y="950.6"/><use href="#arm" x="838.3" y="950.6"/><use href="#arm" x="852.0" y="950.6"/>
<path d="M448.500 819.500L456 827M859.800 819.500L852.500 827M448.500 957.800L456 950.500M859.800 957.800L852.500 950.500" stroke="#020304" stroke-width="2" fill="none"/>
<use href="#tk" x="456.7" y="827.6"/><use href="#tk" x="470.3" y="827.6"/><use href="#tk" x="484.0" y="827.6"/><use href="#tk" x="497.6" y="827.6"/><use href="#tk" x="511.2" y="827.6"/><use href="#tk" x="524.9" y="827.6"/><use href="#tk" x="538.5" y="827.6"/><use href="#tk" x="552.1" y="827.6"/><use href="#tk" x="565.7" y="827.6"/><use href="#tk" x="579.4" y="827.6"/><use href="#tk" x="593.0" y="827.6"/><use href="#tk" x="606.6" y="827.6"/><use href="#tk" x="620.3" y="827.6"/><use href="#tk" x="633.9" y="827.6"/><use href="#tk" x="647.5" y="827.6"/><use href="#tk" x="661.1" y="827.6"/><use href="#tk" x="674.8" y="827.6"/><use href="#tk" x="688.4" y="827.6"/><use href="#tk" x="702.0" y="827.6"/><use href="#tk" x="715.7" y="827.6"/><use href="#tk" x="729.3" y="827.6"/><use href="#tk" x="742.9" y="827.6"/><use href="#tk" x="756.6" y="827.6"/><use href="#tk" x="770.2" y="827.6"/><use href="#tk" x="783.8" y="827.6"/><use href="#tk" x="797.5" y="827.6"/><use href="#tk" x="811.1" y="827.6"/><use href="#tk" x="824.7" y="827.6"/><use href="#tk" x="838.3" y="827.6"/><use href="#tk" x="852.0" y="827.6"/><use href="#td" x="456.7" y="841.3"/><use href="#td" x="470.3" y="841.3"/><use href="#td" x="484.0" y="841.3"/><use href="#td" x="497.6" y="841.3"/><use href="#td" x="511.2" y="841.3"/><use href="#td" x="524.9" y="841.3"/><use href="#td" x="538.5" y="841.3"/><use href="#td" x="552.1" y="841.3"/><use href="#td" x="565.7" y="841.3"/><use href="#td" x="579.4" y="841.3"/><use href="#td" x="593.0" y="841.3"/><use href="#td" x="606.6" y="841.3"/><use href="#td" x="620.3" y="841.3"/><use href="#td" x="633.9" y="841.3"/><use href="#td" x="647.5" y="841.3"/><use href="#td" x="661.1" y="841.3"/><use href="#td" x="674.8" y="841.3"/><use href="#td" x="688.4" y="841.3"/><use href="#td" x="702.0" y="841.3"/><use href="#td" x="715.7" y="841.3"/><use href="#td" x="729.3" y="841.3"/><use href="#td" x="742.9" y="841.3"/><use href="#td" x="756.6" y="841.3"/><use href="#td" x="770.2" y="841.3"/><use href="#td" x="783.8" y="841.3"/><use href="#td" x="797.5" y="841.3"/><use href="#td" x="811.1" y="841.3"/><use href="#td" x="824.7" y="841.3"/><use href="#td" x="838.3" y="841.3"/><use href="#td" x="852.0" y="841.3"/><use href="#td" x="456.7" y="854.9"/><use href="#td" x="470.3" y="854.9"/><use href="#td" x="484.0" y="854.9"/><use href="#td" x="497.6" y="854.9"/><use href="#td" x="511.2" y="854.9"/><use href="#td" x="524.9" y="854.9"/><use href="#td" x="538.5" y="854.9"/><use href="#td" x="552.1" y="854.9"/><use href="#td" x="565.7" y="854.9"/><use href="#td" x="579.4" y="854.9"/><use href="#td" x="593.0" y="854.9"/><use href="#td" x="606.6" y="854.9"/><use href="#td" x="620.3" y="854.9"/><use href="#td" x="633.9" y="854.9"/><use href="#td" x="647.5" y="854.9"/><use href="#td" x="661.1" y="854.9"/><use href="#td" x="674.8" y="854.9"/><use href="#td" x="688.4" y="854.9"/><use href="#td" x="702.0" y="854.9"/><use href="#td" x="715.7" y="854.9"/><use href="#td" x="729.3" y="854.9"/><use href="#td" x="742.9" y="854.9"/><use href="#td" x="756.6" y="854.9"/><use href="#td" x="770.2" y="854.9"/><use href="#td" x="783.8" y="854.9"/><use href="#td" x="797.5" y="854.9"/><use href="#td" x="811.1" y="854.9"/><use href="#td" x="824.7" y="854.9"/><use href="#td" x="838.3" y="854.9"/><use href="#td" x="852.0" y="854.9"/><use href="#td" x="456.7" y="868.6"/><use href="#td" x="470.3" y="868.6"/><use href="#td" x="484.0" y="868.6"/><use href="#td" x="497.6" y="868.6"/><use href="#td" x="511.2" y="868.6"/><use href="#td" x="524.9" y="868.6"/><use href="#td" x="538.5" y="868.6"/><use href="#td" x="552.1" y="868.6"/><use href="#td" x="565.7" y="868.6"/><use href="#td" x="579.4" y="868.6"/><use href="#td" x="593.0" y="868.6"/><use href="#td" x="606.6" y="868.6"/><use href="#td" x="620.3" y="868.6"/><use href="#td" x="633.9" y="868.6"/><use href="#td" x="647.5" y="868.6"/><use href="#td" x="661.1" y="868.6"/><use href="#td" x="674.8" y="868.6"/><use href="#td" x="688.4" y="868.6"/><use href="#td" x="702.0" y="868.6"/><use href="#td" x="715.7" y="868.6"/><use href="#td" x="729.3" y="868.6"/><use href="#td" x="742.9" y="868.6"/><use href="#td" x="756.6" y="868.6"/><use href="#td" x="770.2" y="868.6"/><use href="#td" x="783.8" y="868.6"/><use href="#td" x="797.5" y="868.6"/><use href="#td" x="811.1" y="868.6"/><use href="#td" x="824.7" y="868.6"/><use href="#td" x="838.3" y="868.6"/><use href="#td" x="852.0" y="868.6"/><use href="#td" x="456.7" y="882.3"/><use href="#td" x="470.3" y="882.3"/><use href="#td" x="484.0" y="882.3"/><use href="#td" x="497.6" y="882.3"/><use href="#td" x="511.2" y="882.3"/><use href="#td" x="524.9" y="882.3"/><use href="#td" x="538.5" y="882.3"/><use href="#td" x="552.1" y="882.3"/><use href="#td" x="565.7" y="882.3"/><use href="#td" x="579.4" y="882.3"/><use href="#td" x="593.0" y="882.3"/><use href="#td" x="606.6" y="882.3"/><use href="#td" x="620.3" y="882.3"/><use href="#td" x="633.9" y="882.3"/><use href="#td" x="647.5" y="882.3"/><use href="#td" x="661.1" y="882.3"/><use href="#td" x="674.8" y="882.3"/><use href="#td" x="688.4" y="882.3"/><use href="#td" x="702.0" y="882.3"/><use href="#td" x="715.7" y="882.3"/><use href="#td" x="729.3" y="882.3"/><use href="#td" x="742.9" y="882.3"/><use href="#td" x="756.6" y="882.3"/><use href="#td" x="770.2" y="882.3"/><use href="#td" x="783.8" y="882.3"/><use href="#td" x="797.5" y="882.3"/><use href="#td" x="811.1" y="882.3"/><use href="#td" x="824.7" y="882.3"/><use href="#td" x="838.3" y="882.3"/><use href="#td" x="852.0" y="882.3"/><use href="#td" x="456.7" y="896.0"/><use href="#td" x="470.3" y="896.0"/><use href="#td" x="484.0" y="896.0"/><use href="#td" x="497.6" y="896.0"/><use href="#td" x="511.2" y="896.0"/><use href="#td" x="524.9" y="896.0"/><use href="#td" x="538.5" y="896.0"/><use href="#td" x="552.1" y="896.0"/><use href="#td" x="565.7" y="896.0"/><use href="#td" x="579.4" y="896.0"/><use href="#td" x="593.0" y="896.0"/><use href="#td" x="606.6" y="896.0"/><use href="#td" x="620.3" y="896.0"/><use href="#td" x="633.9" y="896.0"/><use href="#td" x="647.5" y="896.0"/><use href="#td" x="661.1" y="896.0"/><use href="#td" x="674.8" y="896.0"/><use href="#td" x="688.4" y="896.0"/><use href="#td" x="702.0" y="896.0"/><use href="#td" x="715.7" y="896.0"/><use href="#td" x="729.3" y="896.0"/><use href="#td" x="742.9" y="896.0"/><use href="#td" x="756.6" y="896.0"/><use href="#td" x="770.2" y="896.0"/><use href="#td" x="783.8" y="896.0"/><use href="#td" x="797.5" y="896.0"/><use href="#td" x="811.1" y="896.0"/><use href="#td" x="824.7" y="896.0"/><use href="#td" x="838.3" y="896.0"/><use href="#td" x="852.0" y="896.0"/><use href="#td" x="456.7" y="909.6"/><use href="#td" x="470.3" y="909.6"/><use href="#td" x="484.0" y="909.6"/><use href="#td" x="497.6" y="909.6"/><use href="#td" x="511.2" y="909.6"/><use href="#td" x="524.9" y="909.6"/><use href="#td" x="538.5" y="909.6"/><use href="#td" x="552.1" y="909.6"/><use href="#td" x="565.7" y="909.6"/><use href="#td" x="579.4" y="909.6"/><use href="#td" x="593.0" y="909.6"/><use href="#td" x="606.6" y="909.6"/><use href="#td" x="620.3" y="909.6"/><use href="#td" x="633.9" y="909.6"/><use href="#td" x="647.5" y="909.6"/><use href="#td" x="661.1" y="909.6"/><use href="#td" x="674.8" y="909.6"/><use href="#td" x="688.4" y="909.6"/><use href="#td" x="702.0" y="909.6"/><use href="#td" x="715.7" y="909.6"/><use href="#td" x="729.3" y="909.6"/><use href="#td" x="742.9" y="909.6"/><use href="#td" x="756.6" y="909.6"/><use href="#td" x="770.2" y="909.6"/><use href="#td" x="783.8" y="909.6"/><use href="#td" x="797.5" y="909.6"/><use href="#td" x="811.1" y="909.6"/><use href="#td" x="824.7" y="909.6"/><use href="#td" x="838.3" y="909.6"/><use href="#td" x="852.0" y="909.6"/><use href="#td" x="456.7" y="923.3"/><use href="#td" x="470.3" y="923.3"/><use href="#td" x="484.0" y="923.3"/><use href="#td" x="497.6" y="923.3"/><use href="#td" x="511.2" y="923.3"/><use href="#td" x="524.9" y="923.3"/><use href="#td" x="538.5" y="923.3"/><use href="#td" x="552.1" y="923.3"/><use href="#td" x="565.7" y="923.3"/><use href="#td" x="579.4" y="923.3"/><use href="#td" x="593.0" y="923.3"/><use href="#td" x="606.6" y="923.3"/><use href="#td" x="620.3" y="923.3"/><use href="#td" x="633.9" y="923.3"/><use href="#td" x="647.5" y="923.3"/><use href="#td" x="661.1" y="923.3"/><use href="#td" x="674.8" y="923.3"/><use href="#td" x="688.4" y="923.3"/><use href="#td" x="702.0" y="923.3"/><use href="#td" x="715.7" y="923.3"/><use href="#td" x="729.3" y="923.3"/><use href="#td" x="742.9" y="923.3"/><use href="#td" x="756.6" y="923.3"/><use href="#td" x="770.2" y="923.3"/><use href="#td" x="783.8" y="923.3"/><use href="#td" x="797.5" y="923.3"/><use href="#td" x="811.1" y="923.3"/><use href="#td" x="824.7" y="923.3"/><use href="#td" x="838.3" y="923.3"/><use href="#td" x="852.0" y="923.3"/><use href="#td" x="456.7" y="937.0"/><use href="#td" x="470.3" y="937.0"/><use href="#td" x="484.0" y="937.0"/><use href="#td" x="497.6" y="937.0"/><use href="#td" x="511.2" y="937.0"/><use href="#td" x="524.9" y="937.0"/><use href="#td" x="538.5" y="937.0"/><use href="#td" x="552.1" y="937.0"/><use href="#td" x="565.7" y="937.0"/><use href="#td" x="579.4" y="937.0"/><use href="#td" x="593.0" y="937.0"/><use href="#td" x="606.6" y="937.0"/><use href="#td" x="620.3" y="937.0"/><use href="#td" x="633.9" y="937.0"/><use href="#td" x="647.5" y="937.0"/><use href="#td" x="661.1" y="937.0"/><use href="#td" x="674.8" y="937.0"/><use href="#td" x="688.4" y="937.0"/><use href="#td" x="702.0" y="937.0"/><use href="#td" x="715.7" y="937.0"/><use href="#td" x="729.3" y="937.0"/><use href="#td" x="742.9" y="937.0"/><use href="#td" x="756.6" y="937.0"/><use href="#td" x="770.2" y="937.0"/><use href="#td" x="783.8" y="937.0"/><use href="#td" x="797.5" y="937.0"/><use href="#td" x="811.1" y="937.0"/><use href="#td" x="824.7" y="937.0"/><use href="#td" x="838.3" y="937.0"/><use href="#td" x="852.0" y="937.0"/><use href="#td" x="456.7" y="950.6"/><use href="#td" x="470.3" y="950.6"/><use href="#td" x="484.0" y="950.6"/><use href="#td" x="497.6" y="950.6"/><use href="#td" x="511.2" y="950.6"/><use href="#td" x="524.9" y="950.6"/><use href="#td" x="538.5" y="950.6"/><use href="#td" x="552.1" y="950.6"/><use href="#td" x="565.7" y="950.6"/><use href="#td" x="579.4" y="950.6"/><use href="#td" x="593.0" y="950.6"/><use href="#td" x="606.6" y="950.6"/><use href="#td" x="620.3" y="950.6"/><use href="#td" x="633.9" y="950.6"/><use href="#td" x="647.5" y="950.6"/><use href="#td" x="661.1" y="950.6"/><use href="#td" x="674.8" y="950.6"/><use href="#td" x="688.4" y="950.6"/><use href="#td" x="702.0" y="950.6"/><use href="#td" x="715.7" y="950.6"/><use href="#td" x="729.3" y="950.6"/><use href="#td" x="742.9" y="950.6"/><use href="#td" x="756.6" y="950.6"/><use href="#td" x="770.2" y="950.6"/><use href="#td" x="783.8" y="950.6"/><use href="#td" x="797.5" y="950.6"/><use href="#td" x="811.1" y="950.6"/><use href="#td" x="824.7" y="950.6"/><use href="#td" x="838.3" y="950.6"/><use href="#td" x="852.0" y="950.6"/>
<path d="M456.800 812.400V827.400" stroke="#f21a1a" stroke-width="3" fill="none"/>
<path d="M456.800 827V957" stroke="#050607" stroke-width="2.600" fill="none"/>
<path d="M456.800 835.500V957" stroke="#e02a3a" stroke-width="1.800" stroke-dasharray="5.500 8.170" fill="none" opacity="0.85"/>
<rect x="844.500" y="966.500" width="18.500" height="11.500" fill="#fff" opacity="0.9"/>
<path d="M853.300 963.500l6.800 4.200-1.800 7.300h-10l-1.800-7.300z" fill="#f24444" opacity="0.95"/>
<g font-family="Liberation Sans, sans-serif" font-size="12" text-anchor="middle" fill="#5d7f9e" opacity="0.5">
<text x="456.7" y="963.2">291</text><text x="470.3" y="963.2">281</text><text x="484.0" y="963.2">271</text><text x="497.6" y="963.2">261</text><text x="511.2" y="963.2">251</text><text x="524.9" y="963.2">241</text><text x="538.5" y="963.2">231</text><text x="552.1" y="963.2">221</text><text x="565.7" y="963.2">211</text><text x="579.4" y="963.2">201</text><text x="593.0" y="963.2">191</text><text x="606.6" y="963.2">181</text><text x="620.3" y="963.2">171</text><text x="633.9" y="963.2">161</text><text x="647.5" y="963.2">151</text><text x="661.1" y="963.2">141</text><text x="674.8" y="963.2">131</text><text x="688.4" y="963.2">121</text><text x="702.0" y="963.2">111</text><text x="715.7" y="963.2">101</text><text x="729.3" y="963.2">091</text><text x="742.9" y="963.2">081</text><text x="756.6" y="963.2">071</text><text x="770.2" y="963.2">061</text><text x="783.8" y="963.2">051</text><text x="797.5" y="963.2">041</text><text x="811.1" y="963.2">031</text><text x="824.7" y="963.2">021</text><text x="838.3" y="963.2">011</text><text x="852.0" y="963.2">001</text>
</g>
<g font-family="Liberation Sans, sans-serif" font-size="12" text-anchor="middle" fill="#141414">
<text x="456.5" y="976.700">290</text><text x="470.1" y="976.700">280</text><text x="483.8" y="976.700">270</text><text x="497.4" y="976.700">260</text><text x="511.0" y="976.700">250</text><text x="524.6" y="976.700">240</text><text x="538.3" y="976.700">230</text><text x="551.9" y="976.700">220</text><text x="565.5" y="976.700">210</text><text x="579.2" y="976.700">200</text><text x="592.8" y="976.700">190</text><text x="606.4" y="976.700">180</text><text x="620.1" y="976.700">170</text><text x="633.7" y="976.700">160</text><text x="647.3" y="976.700">150</text><text x="660.9" y="976.700">140</text><text x="674.6" y="976.700">130</text><text x="688.2" y="976.700">120</text><text x="701.8" y="976.700">110</text><text x="715.5" y="976.700">100</text><text x="729.1" y="976.700">090</text><text x="742.7" y="976.700">080</text><text x="756.4" y="976.700">070</text><text x="770.0" y="976.700">060</text><text x="783.6" y="976.700">050</text><text x="797.2" y="976.700">040</text><text x="810.9" y="976.700">030</text><text x="824.5" y="976.700">020</text><text x="838.1" y="976.700">010</text><text x="851.8" y="976.700">000</text>
</g>
</g>
<text x="1481.5" y="955.8" text-anchor="end" font-family="Liberation Sans, sans-serif" font-weight="700" font-size="13" letter-spacing="-0.550" fill="#111" stroke="#111" stroke-width="2.400" stroke-linejoin="round">47.485°</text><text x="1481.5" y="955.8" text-anchor="end" font-family="Liberation Sans, sans-serif" font-weight="700" font-size="13" letter-spacing="-0.550" fill="#fff">47.485°</text>
<text x="865.5" y="1036" text-anchor="end" font-family="Liberation Sans, sans-serif" font-weight="700" font-size="13" letter-spacing="-0.550" fill="#111" stroke="#111" stroke-width="2.400" stroke-linejoin="round">18.915°</text><text x="865.5" y="1036" text-anchor="end" font-family="Liberation Sans, sans-serif" font-weight="700" font-size="13" letter-spacing="-0.550" fill="#fff">18.915°</text>
<text x="202" y="1040.6" text-anchor="end" font-family="Liberation Sans, sans-serif" font-weight="700" font-size="13" letter-spacing="-0.550" fill="#111" stroke="#111" stroke-width="2.400" stroke-linejoin="round">18.914°</text><text x="202" y="1040.6" text-anchor="end" font-family="Liberation Sans, sans-serif" font-weight="700" font-size="13" letter-spacing="-0.550" fill="#fff">18.914°</text>
</svg>
<div style="left:55.900px;top:99.200px;width:24.100px;height:47.700px;background:#fff;border-radius:2px;box-shadow:0 1px 3px rgba(0,0,0,0.2),0 1px 1px rgba(0,0,0,0.12);"></div>
<span style="left:63.90px;top:102.33px;font-size:14.5px;line-height:14.5px;font-weight:700;color:#111;">+</span>
<span style="left:63.90px;top:126.83px;font-size:14.5px;line-height:14.5px;font-weight:700;color:#111;">−</span>
<div style="left:89.300px;top:100px;width:183.700px;height:48px;background:#fff;border-radius:4px;box-shadow:0 1px 3px rgba(0,0,0,0.2),0 1px 1px rgba(0,0,0,0.12);"></div>
<div style="left:224px;top:100px;width:1px;height:48px;background:#dcdcdc"></div>
<svg style="left:100.75px;top:110.95px;" width="24.5" height="24.5" viewBox="0 0 24 24" fill="#6f6f6f"><path d="M7.11 8.53L5.7 7.11C4.8 8.27 4.24 9.61 4.07 11h2.02c.14-.87.49-1.72 1.02-2.47zM6.09 13H4.07c.17 1.39.72 2.73 1.62 3.89l1.41-1.42c-.52-.75-.87-1.59-1.01-2.47zm1.01 5.32c1.16.9 2.51 1.44 3.9 1.61V17.9c-.87-.15-1.71-.49-2.46-1.03L7.1 18.32zM13 4.07V1L8.45 5.55 13 10V6.09c2.84.48 5 2.94 5 5.91s-2.16 5.43-5 5.91v2.02c3.95-.49 7-3.85 7-7.93s-3.05-7.44-7-7.93z"/></svg>
<span style="left:137.00px;top:112.32px;font-size:16.4px;line-height:16.4px;transform:scaleX(0.8647);transform-origin:0 0;color:#222;">59,0</span>
<div style="left:137px;top:135.700px;width:75px;height:1px;background:#8a8a8a"></div>
<svg style="left:239px;top:114px" width="20" height="20" viewBox="0 0 22 22" fill="none" stroke="#6f6f6f" stroke-width="2"><circle cx="11" cy="11" r="6.400"/><path d="M2 6.200V2H6.200zM15.800 2H20V6.200zM20 15.800V20H15.800zM6.200 20H2V15.800z" fill="#6f6f6f" stroke="none"/></svg>
<div style="left:57px;top:156.300px;width:48px;height:432.500px;background:#fff;border-radius:4px;box-shadow:0 1px 3px rgba(0,0,0,0.2),0 1px 1px rgba(0,0,0,0.12);"></div>
<div style="left:57px;top:252.300px;width:48px;height:1px;background:#e0e0e0"></div>
<svg style="left:68.80px;top:168.00px;" width="24" height="24" viewBox="0 0 24 24" fill="#2d8ee0"><path d="M3 5h2V3c-1.1 0-2 .9-2 2zm0 8h2v-2H3v2zm4 8h2v-2H7v2zM3 9h2V7H3v2zm10-6h-2v2h2V3zm6 0v2h2c0-1.1-.9-2-2-2zM5 21v-2H3c0 1.1.9 2 2 2zm-2-4h2v-2H3v2zM9 3H7v2h2V3zm2 18h2v-2h-2v2zm8-8h2v-2h-2v2zm0 8c1.1 0 2-.9 2-2h-2v2zm0-12h2V7h-2v2zm0 8h2v-2h-2v2zm-4 4h2v-2h-2v2zm0-16h2V3h-2v2zM7 17h10V7H7v10zm2-8h6v6H9V9z"/></svg>
<svg style="left:68.80px;top:216.00px;" width="24" height="24" viewBox="0 0 24 24" fill="#6e6e6e"><path d="M15.5 14h-.79l-.28-.27C15.41 12.59 16 11.11 16 9.5 16 5.91 13.09 3 9.5 3S3 5.91 3 9.5 5.91 16 9.5 16c1.61 0 3.09-.59 4.23-1.57l.27.28v.79l5 4.99L20.49 19l-4.99-5zm-6 0C7.01 14 5 11.99 5 9.5S7.01 5 9.5 5 14 7.01 14 9.5 11.99 14 9.5 14zm2.500-4h-2v2H9v-2H7V9h2V7h1v2h2v1z"/></svg>
<svg style="left:68.80px;top:265.00px;" width="24" height="24" viewBox="0 0 24 24" fill="#6e6e6e"><circle cx="12" cy="12" r="8"/></svg>
<svg style="left:68.80px;top:313.00px;" width="24" height="24" viewBox="0 0 24 24" fill="#6e6e6e"><path d="M3.5 18.49l6-6.01 4 4L22 6.92l-1.41-1.41-7.09 7.97-4-4L2 16.99z"/></svg>
<svg style="left:68.80px;top:361.00px;" width="24" height="24" viewBox="0 0 24 24" fill="#6e6e6e"><circle cx="12" cy="12" r="9" fill="none" stroke="#6e6e6e" stroke-width="2"/></svg>
<svg style="left:68.80px;top:409.00px;" width="24" height="24" viewBox="0 0 24 24" fill="#6e6e6e"><path d="M18 4H6c-1.1 0-2 .9-2 2v12c0 1.1.9 2 2 2h12c1.1 0 2-.9 2-2V6c0-1.1-.9-2-2-2zm0 14H6V6h12v12z"/></svg>
<svg style="left:68.80px;top:457.00px;" width="24" height="24" viewBox="0 0 24 24" fill="#6e6e6e"><path d="M22 9.24l-7.19-.62L12 2 9.19 8.63 2 9.24l5.46 4.73L5.82 21 12 17.27 18.18 21l-1.63-7.03L22 9.24zM12 15.4l-3.76 2.27 1-4.28-3.32-2.88 4.38-.38L12 6.1l1.71 4.04 4.38.38-3.32 2.88 1 4.28L12 15.4z"/></svg>
<svg style="left:68.80px;top:505.00px;" width="24" height="24" viewBox="0 0 24 24" fill="#6e6e6e"><path d="M9.64 7.64c.23-.5.36-1.05.36-1.64 0-2.21-1.79-4-4-4S2 3.79 2 6s1.79 4 4 4c.59 0 1.14-.13 1.64-.36L10 12l-2.36 2.36C7.14 14.13 6.59 14 6 14c-2.21 0-4 1.79-4 4s1.79 4 4 4 4-1.79 4-4c0-.59-.13-1.14-.36-1.64L12 14l7 7h3v-1L9.64 7.64zM6 8c-1.1 0-2-.89-2-2s.9-2 2-2 2 .89 2 2-.9 2-2 2zm0 12c-1.1 0-2-.89-2-2s.9-2 2-2 2 .89 2 2-.9 2-2 2zm6-7.500c-.28 0-.5-.22-.5-.5s.22-.5.5-.5.5.22.5.5-.22.5-.5.5zM19 3l-6 6 2 2 7-7V3z"/></svg>
<svg style="left:68.80px;top:553.00px;" width="24" height="24" viewBox="0 0 24 24" fill="#6e6e6e"><path d="M3 2.500L20.500 14.500L15.500 20z"/></svg>
<div style="left:57px;top:983px;width:24px;height:24px;background:#fff;border-radius:2px;box-shadow:0 1px 3px rgba(0,0,0,0.2),0 1px 1px rgba(0,0,0,0.12);"></div>
<span style="left:66.80px;top:987.87px;font-size:13.5px;line-height:13.5px;font-weight:700;color:#3c1a4a;">i</span>
<div style="left:57.700px;top:1014px;width:227.600px;height:15.700px;background:#fff;border:1.300px solid #111;border-top:0;box-shadow:0 0 2px rgba(255,255,255,0.9)"></div>
<span style="left:160.00px;top:1016.31px;font-size:10.5px;line-height:10.5px;transform:scaleX(0.9425);transform-origin:0 0;color:#6a6a6a;">50 m</span>
<svg width="0" height="0" style="left:0;top:0"><defs><filter id="lcdnoise" x="0" y="0" width="100%" height="100%"><feTurbulence type="fractalNoise" baseFrequency="0.85" numOctaves="2" seed="7" result="n"/><feColorMatrix type="matrix" values="0 0 0 0 0  0 0 0 0 0  0 0 0 0 0  0 0 0 -1.6 0.86" in="n"/><feComposite operator="in" in2="SourceGraphic"/></filter></defs></svg>
<div style="left:1483px;top:71px;width:437px;height:969px;background:#f4f4f4"></div>
<div style="left:1490px;top:71px;width:430px;height:21px;background:#f3f3f3"></div>
<div style="left:1489.3px;top:72px;width:85.40000000000009px;height:20px;background:#fff;border:1px solid #cfcfcf;border-bottom:0"></div>
<span style="left:1500.80px;top:76.04px;font-size:12px;line-height:12px;transform:scaleX(0.9721);transform-origin:0 0;color:#777;">Clocks</span>
<svg style="left:1543px;top:77.5px" width="10" height="10" viewBox="0 0 10 10" fill="none" stroke="#777" stroke-width="1"><path d="M0.5 3.5h6v5.500h-6z"/><path d="M2.500 3.500v-2.500h6.500v5.500h-2.500"/></svg>
<svg style="left:1558.8px;top:78.5px" width="7.500" height="7.500" viewBox="0 0 8 8" fill="none" stroke="#111" stroke-width="1.2"><path d="M0.300 0.300l7.400 7.400M7.700 0.300l-7.400 7.400"/></svg>
<div style="left:1577.2px;top:72px;width:87.79999999999995px;height:19px;background:#dddddd;border:1px solid #cfcfcf;border-bottom:0"></div>
<span style="left:1588.30px;top:76.04px;font-size:12px;line-height:12px;letter-spacing:-0.046px;color:#8a8a8a;">Locations</span>
<svg style="left:1648.8px;top:78.5px" width="7.500" height="7.500" viewBox="0 0 8 8" fill="none" stroke="#888" stroke-width="1"><path d="M0.300 0.300l7.400 7.400M7.700 0.300l-7.400 7.400"/></svg>
<div style="left:1667.3px;top:72px;width:72.40000000000009px;height:19px;background:#dddddd;border:1px solid #cfcfcf;border-bottom:0"></div>
<span style="left:1678.80px;top:76.04px;font-size:12px;line-height:12px;letter-spacing:-0.104px;color:#8a8a8a;">Layers</span>
<svg style="left:1723.8px;top:78.5px" width="7.500" height="7.500" viewBox="0 0 8 8" fill="none" stroke="#888" stroke-width="1"><path d="M0.300 0.300l7.400 7.400M7.700 0.300l-7.400 7.400"/></svg>
<svg style="left:1886px;top:76px" width="30" height="10" viewBox="0 0 30 10" fill="none"><path d="M0.500 1.500h8v7.500h-8z" stroke="#777" stroke-width="1"/><path d="M0 1h9" stroke="#777" stroke-width="2"/><path d="M18 0.500l9 9M27 0.500l-9 9" stroke="#a8a8a8" stroke-width="1"/></svg>
<div style="left:1490px;top:91.500px;width:429px;height:197px;background:#fff"></div>
<div class="lcd" style="left:1490px;top:92px;width:429px;height:95.5px;background:#90a865;box-shadow:inset 0 0 9px 1px rgba(60,80,30,0.55),inset 0 0 2px rgba(60,80,30,0.55)"></div>
<svg style="left:1490px;top:92px" width="429" height="95.5"><rect width="429" height="95.5" fill="#000" filter="url(#lcdnoise)" opacity="0.22"/></svg>
<span style="left:1499.80px;top:100.89px;font-size:11px;line-height:11px;font-weight:700;color:#111;">+</span>
<span style="left:1653.40px;top:98.94px;font-size:13.3px;line-height:13.3px;transform:scaleX(0.8618);transform-origin:0 0;color:rgba(0,0,0,0.27);">END</span>
<span style="left:1686.90px;top:98.94px;font-size:13.3px;line-height:13.3px;transform:scaleX(0.9209);transform-origin:0 0;color:#111;">SHOW</span>
<span style="left:1733.60px;top:98.94px;font-size:13.3px;line-height:13.3px;transform:scaleX(0.8264);transform-origin:0 0;color:rgba(0,0,0,0.27);">SRV</span>
<div class="dot" style="left:1902px;top:99px;width:10px;height:10px;background:#050505"></div>
<p class="digits" style="left:1583.300px;top:122.5px;-webkit-text-stroke:1.300px #90a865">00<b>:</b>00<b>:</b>00<b class="p">.</b>0</p>
<div class="lcd" style="left:1490px;top:192.3px;width:429px;height:95.4px;background:#eb8d27;box-shadow:inset 0 0 9px 1px rgba(150,70,0,0.6),inset 0 0 2px rgba(150,70,0,0.6)"></div>
<svg style="left:1490px;top:192.3px" width="429" height="95.4"><rect width="429" height="95.4" fill="#000" filter="url(#lcdnoise)" opacity="0.22"/></svg>
<span style="left:1499.20px;top:199.50px;font-size:13px;line-height:13px;color:#111;">X</span>
<span style="left:1653.40px;top:199.24px;font-size:13.3px;line-height:13.3px;transform:scaleX(0.8618);transform-origin:0 0;color:#111;">END</span>
<span style="left:1686.90px;top:199.24px;font-size:13.3px;line-height:13.3px;transform:scaleX(0.9209);transform-origin:0 0;color:rgba(0,0,0,0.27);">SHOW</span>
<span style="left:1733.60px;top:199.24px;font-size:13.3px;line-height:13.3px;transform:scaleX(0.8264);transform-origin:0 0;color:rgba(0,0,0,0.27);">SRV</span>
<div class="dot" style="left:1902px;top:199.3px;width:10px;height:10px;background:#050505"></div>
<p class="digits" style="left:1583.300px;top:222.8px;-webkit-text-stroke:1.300px #eb8d27">00<b>:</b>00<b>:</b>00<b class="p">.</b>0</p>
<div style="left:1490px;top:294px;width:430px;height:21px;background:#f3f3f3"></div>
<div style="left:1489.300px;top:314.300px;width:430px;height:725px;background:#fff;border:1px solid #cfcfcf"></div>
<div style="left:1489.3px;top:295.3px;width:118.40000000000009px;height:20px;background:#fff;border:1px solid #cfcfcf;border-bottom:0"></div>
<span style="left:1500.00px;top:299.34px;font-size:12px;line-height:12px;letter-spacing:0.012px;color:#777;">Show control</span>
<svg style="left:1576px;top:300.8px" width="10" height="10" viewBox="0 0 10 10" fill="none" stroke="#777" stroke-width="1"><path d="M0.5 3.5h6v5.500h-6z"/><path d="M2.500 3.500v-2.500h6.500v5.500h-2.500"/></svg>
<svg style="left:1591.5px;top:301.8px" width="7.500" height="7.500" viewBox="0 0 8 8" fill="none" stroke="#111" stroke-width="1.2"><path d="M0.300 0.300l7.400 7.400M7.700 0.300l-7.400 7.400"/></svg>
<svg style="left:1886px;top:299.3px" width="30" height="10" viewBox="0 0 30 10" fill="none"><path d="M0.500 1.500h8v7.500h-8z" stroke="#777" stroke-width="1"/><path d="M0 1h9" stroke="#777" stroke-width="2"/><path d="M18 0.500l9 9M27 0.500l-9 9" stroke="#a8a8a8" stroke-width="1"/></svg>
<div class="dot" style="left:1506px;top:346px;width:14px;height:14px;background:#0cbf4f;border:1px solid rgba(0,0,0,0.28)"></div>
<span style="left:1536.30px;top:335.15px;font-size:14px;line-height:14px;letter-spacing:0.050px;color:#2b2b2b;">Show with 300 drones</span>
<span style="left:1536.30px;top:355.35px;font-size:14px;line-height:14px;transform:scaleX(0.9612);transform-origin:0 0;color:#858585;">300 drones, 5:04, max AHL 169.3 m, spacing 3.0 m</span>
<svg style="left:1879.80px;top:342.00px;" width="22" height="22" viewBox="0 0 24 24" fill="#555"><path d="M19 6.41L17.590 5 12 10.59 6.41 5 5 6.41 10.59 12 5 17.59 6.41 19 12 13.41 17.59 19 19 17.59 13.41 12z"/></svg>
<div style="left:1491px;top:383px;width:427px;height:1px;background:#e2e2e2"></div>
<div class="dot" style="left:1506px;top:406.7px;width:14px;height:14px;background:#0cbf4f;border:1px solid rgba(0,0,0,0.28)"></div>
<span style="left:1536.30px;top:395.85px;font-size:14px;line-height:14px;letter-spacing:0.199px;color:#2b2b2b;">Setup environment</span>
<span style="left:1536.30px;top:416.05px;font-size:14px;line-height:14px;letter-spacing:-0.101px;color:#858585;">Outdoor, relative to 130.0m AMSL</span>
<div class="dot" style="left:1502px;top:464.7px;width:22px;height:22px;background:#addefb"></div>
<div class="dot" style="left:1506px;top:468.7px;width:14px;height:14px;background:#14a0f1;border:1px solid rgba(0,0,0,0.28)"></div>
<span style="left:1536.30px;top:458.15px;font-size:14px;line-height:14px;letter-spacing:0.069px;color:#2b2b2b;">Adapt show to venue</span>
<span style="left:1536.30px;top:480.15px;font-size:14px;line-height:14px;letter-spacing:0.219px;color:#858585;">Adjust takeoff grid and show layout if needed</span>
<div style="left:1679.200px;top:458.200px;width:20.200px;height:15.600px;background:#1c1c1c;border-radius:2.500px"></div>
<span style="left:1681.80px;top:462.49px;font-size:8.4px;line-height:8.4px;font-weight:700;transform:scaleX(0.8350);transform-origin:0 0;color:#fff;">PRO</span>
<div class="dot" style="left:1506px;top:531px;width:14px;height:14px;background:#0cbf4f;border:1px solid rgba(0,0,0,0.28)"></div>
<span style="left:1536.30px;top:520.15px;font-size:14px;line-height:14px;letter-spacing:-0.008px;color:#2b2b2b;">Assign drones to show</span>
<span style="left:1536.30px;top:540.35px;font-size:14px;line-height:14px;letter-spacing:-0.160px;color:#858585;">Placement accuracy ≤ 0.63 cm</span>
<div class="dot" style="left:1506px;top:591px;width:14px;height:14px;background:#0cbf4f;border:1px solid rgba(0,0,0,0.28)"></div>
<span style="left:1536.30px;top:580.15px;font-size:14px;line-height:14px;letter-spacing:-0.083px;color:#2b2b2b;">Setup geofence</span>
<span style="left:1536.30px;top:600.35px;font-size:14px;line-height:14px;letter-spacing:0.071px;color:#858585;">Automatic geofence in use</span>
<div class="dot" style="left:1506px;top:651px;width:14px;height:14px;background:#0cbf4f;border:1px solid rgba(0,0,0,0.28)"></div>
<span style="left:1536.30px;top:640.15px;font-size:14px;line-height:14px;letter-spacing:0.108px;color:#2b2b2b;">Upload show data</span>
<span style="left:1536.30px;top:660.35px;font-size:14px;line-height:14px;letter-spacing:0.137px;color:#858585;">Click here to start the upload process</span>
<div style="left:1491px;top:688.500px;width:427px;height:1px;background:#e2e2e2"></div>
<div class="dot" style="left:1506px;top:699.8px;width:14px;height:14px;background:#0cbf4f;border:1px solid rgba(0,0,0,0.28)"></div>
<span style="left:1536.30px;top:699.45px;font-size:14px;line-height:14px;letter-spacing:0.133px;color:#2b2b2b;">Onboard preflight checks</span>
<div class="dot" style="left:1506px;top:735.5px;width:14px;height:14px;background:#0cbf4f;border:1px solid rgba(0,0,0,0.28)"></div>
<span style="left:1536.30px;top:735.15px;font-size:14px;line-height:14px;letter-spacing:0.133px;color:#2b2b2b;">Manual preflight checks</span>
<div style="left:1491px;top:761px;width:427px;height:1px;background:#e6e6e6"></div>
<div class="dot" style="left:1506px;top:785px;width:14px;height:14px;background:#14a0f1;border:1px solid rgba(0,0,0,0.28)"></div>
<span style="left:1536.30px;top:774.15px;font-size:14px;line-height:14px;letter-spacing:0.093px;color:#2b2b2b;">Choose start time</span>
<span style="left:1536.30px;top:794.35px;font-size:14px;line-height:14px;letter-spacing:0.128px;color:#858585;">Not set yet</span>
<div style="left:1494px;top:965.500px;width:421px;height:8.500px;background:linear-gradient(0deg,rgba(0,0,0,0.16),rgba(0,0,0,0.04) 55%,rgba(0,0,0,0));-webkit-mask-image:linear-gradient(90deg,transparent,#000 3%,#000 97%,transparent);mask-image:linear-gradient(90deg,transparent,#000 3%,#000 97%,transparent)"></div>
<div style="left:1490.300px;top:974px;width:428px;height:64px;background:#fff"></div>
<div class="dot" style="left:1506px;top:998.7px;width:14px;height:14px;background:#14a0f1;border:1px solid rgba(0,0,0,0.28)"></div>
<span style="left:1536.30px;top:987.98px;font-size:14.2px;line-height:14.2px;font-weight:700;transform:scaleX(0.8519);transform-origin:0 0;color:#262626;">AUTHORIZE START OF SHOW</span>
<span style="left:1536.30px;top:1010.15px;font-size:14px;line-height:14px;letter-spacing:0.299px;color:#858585;">Authorization required before takeoff</span>
<div style="left:1491.900px;top:750.800px;width:428.700px;height:82.300px;border:8px solid #e51c24;border-radius:21px"></div>
</div>
</body>
</html>
